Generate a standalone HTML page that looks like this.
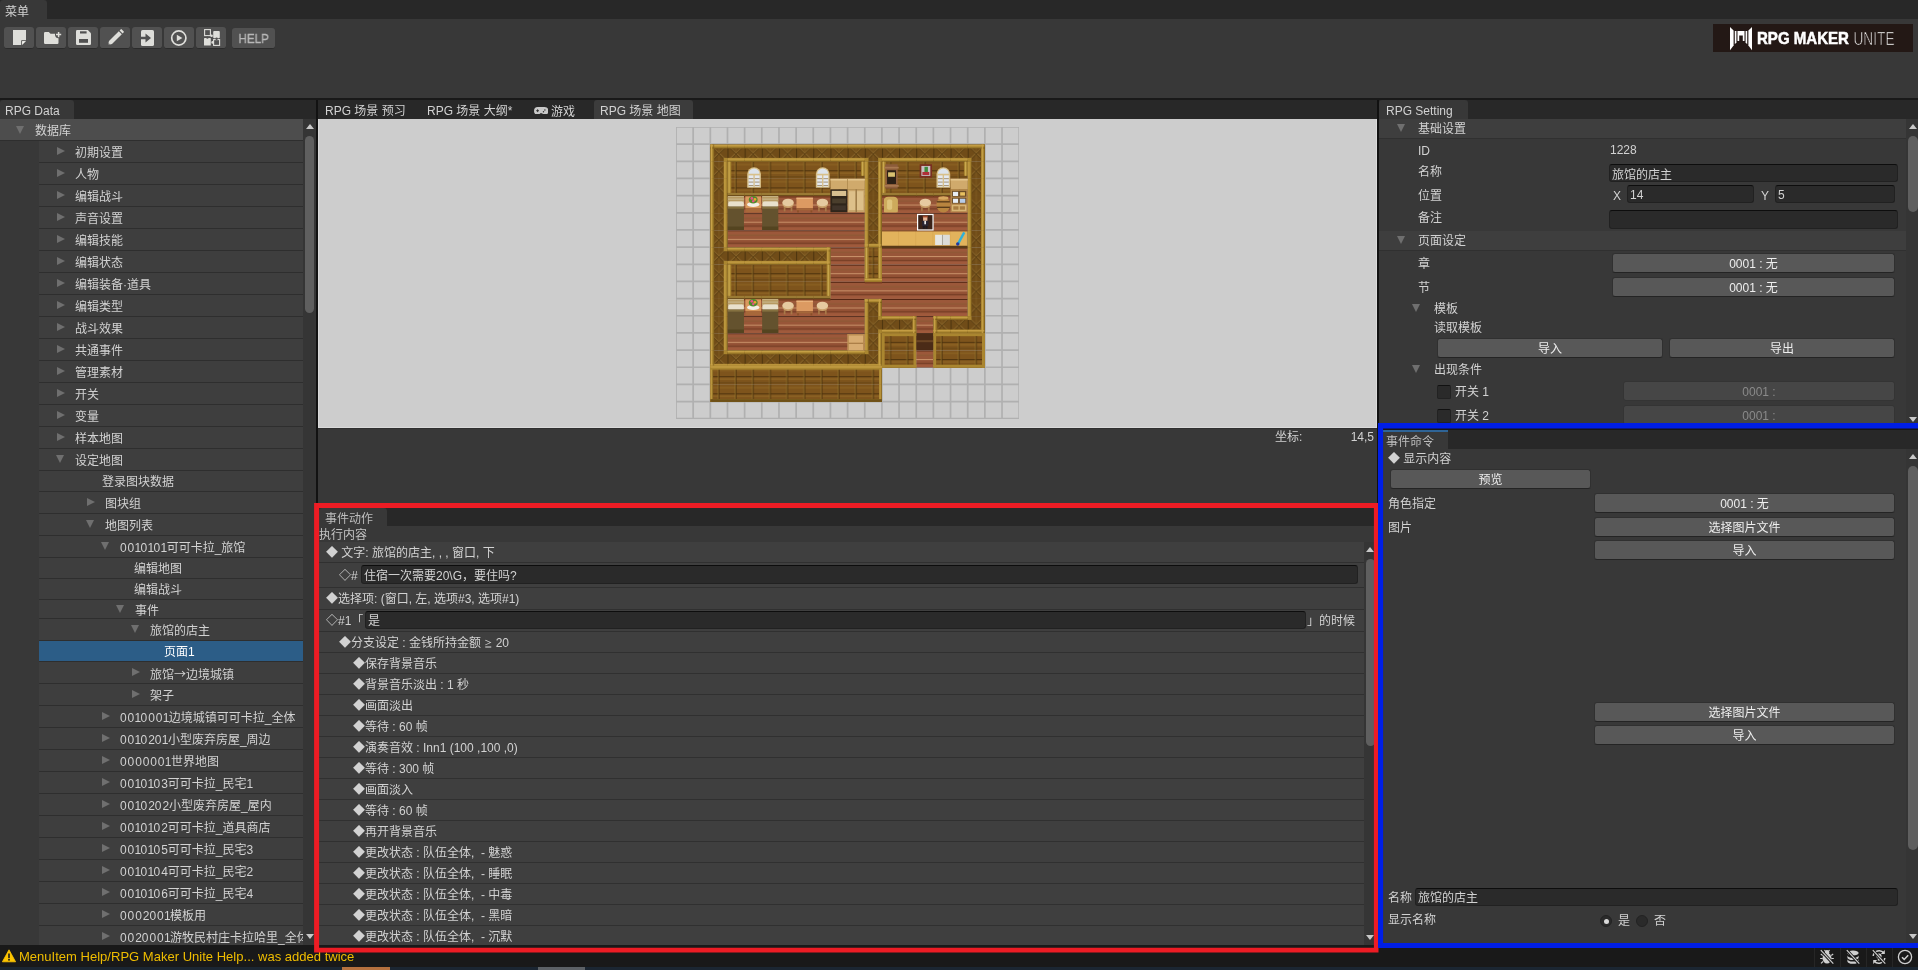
<!DOCTYPE html><html lang="zh"><head><meta charset="utf-8"><title>RPG Maker Unite</title><style>
*{box-sizing:border-box}
html,body{margin:0;padding:0}
body{width:1918px;height:970px;position:relative;overflow:hidden;background:#383838;
 font-family:"Liberation Sans","Noto Sans CJK SC",sans-serif;font-size:12px;color:#d2d2d2;line-height:16px}
.a{position:absolute}
.t{position:absolute;white-space:nowrap;line-height:16px;height:16px}
.bar{position:absolute;background:#282828}
.tab{position:absolute;background:#383838;border-radius:3px 3px 0 0}
.row{position:absolute;left:39px;width:264px;background:#3e3e3e;border-bottom:1px solid #2e2e2e}
.btn{position:absolute;padding-top:2px;background:#585858;border-radius:3px;border:1px solid #303030;border-bottom-color:#242424;
 text-align:center;color:#eeeeee;line-height:16px;white-space:nowrap}
.btn.dis{background:#464646;color:#8a8a8a;border-color:#343434}
.inp{position:absolute;background:#2a2a2a;border-radius:3px;border:1px solid #212121;border-top-color:#0d0d0d;
 color:#d2d2d2;line-height:16px;white-space:nowrap;padding-left:2px;overflow:hidden}
.tb{position:absolute;top:27px;width:30px;height:22px;background:#515151;border-radius:3px;border-bottom:1px solid #2b2b2b}
.arr{position:absolute;width:0;height:0}
.row i{font-style:normal;letter-spacing:.9px}.row b{font-weight:normal;letter-spacing:-.65px;margin-left:-.6px}
.er{position:absolute;left:319px;width:1045px;background:#3f3f3f;border-bottom:1px solid #303030}
.thumb{position:absolute;background:#5f5f5f;border-radius:5px}
</style></head><body><div id="root" style="position:absolute;left:0;top:0;width:1918px;height:970px;will-change:transform">
<div class="bar" style="left:0;top:0;width:1918px;height:19px"></div>
<div class="tab" style="left:0;top:0;width:47px;height:19px"></div>
<div class="t" style="left:5px;top:4px">菜单</div>
<div class="a" style="left:0;top:98px;width:1918px;height:2px;background:#191919"></div>
<div class="tb" style="left:4px"><svg class="a" style="left:0;top:0" width="30" height="21" viewBox="0 0 30 21"><path d="M9 3h13v10.500l-4.500 4.500H9z" fill="#dededa"/><path d="M18 18v-4h4z" fill="#f4f4f0"/><path d="M17.600 18.200v-4.600h4.600" fill="none" stroke="#515151" stroke-width="0.9"/></svg></div>
<div class="tb" style="left:36px"><svg class="a" style="left:0;top:0" width="30" height="21" viewBox="0 0 30 21"><path d="M8 6.200q0-1.200 1.200-1.200h3.600l1.700 1.800h6.800q1.200 0 1.200 1.200v7.800q0 1.200-1.200 1.200H9.200q-1.200 0-1.200-1.200z" fill="#dededa"/><circle cx="22.600" cy="7.600" r="3.600" fill="#515151"/><path d="M22.600 5v5.200M20 7.600h5.200" stroke="#dededa" stroke-width="1.500"/></svg></div>
<div class="tb" style="left:68px"><svg class="a" style="left:0;top:0" width="30" height="21" viewBox="0 0 30 21"><path d="M8 4.200q0-1.200 1.200-1.200h10.600l3.200 3.200v10.600q0 1.200-1.200 1.200H9.200q-1.200 0-1.200-1.200z" fill="#dededa"/><rect x="12" y="4.300" width="6.600" height="2.200" fill="#515151"/><rect x="11" y="12" width="9" height="3.800" fill="#515151"/></svg></div>
<div class="tb" style="left:100px"><svg class="a" style="left:0;top:0" width="30" height="21" viewBox="0 0 30 21"><path d="M8 18l1-4 9.800-9.800 3 3L12 17z" fill="#dededa"/><path d="M19.600 3.400l1-1q.6-.6 1.200 0l1.800 1.800q.6.6 0 1.200l-1 1z" fill="#dededa"/><path d="M8 18l.5-2 1.500 1.500z" fill="#515151"/></svg></div>
<div class="tb" style="left:132px"><svg class="a" style="left:0;top:0" width="30" height="21" viewBox="0 0 30 21"><rect x="9" y="3" width="13" height="16" rx="1.600" fill="#dededa"/><path d="M7 9.800h6.500V6.500l5.500 4.500-5.500 4.500v-3.300H7z" fill="#515151"/></svg></div>
<div class="tb" style="left:164px"><svg class="a" style="left:0;top:0" width="30" height="21" viewBox="0 0 30 21"><circle cx="14.800" cy="11" r="7.100" fill="none" stroke="#dededa" stroke-width="1.700"/><path d="M12.800 7.700l5.600 3.300-5.600 3.300z" fill="#dededa"/></svg></div>
<div class="tb" style="left:196px"><svg class="a" style="left:0;top:0" width="30" height="21" viewBox="0 0 30 21"><rect x="8.600" y="2.600" width="5.800" height="6" fill="none" stroke="#dededa" stroke-width="1.100"/><rect x="10.200" y="4.200" width="2.600" height="2.800" fill="#515151"/><rect x="8" y="11" width="6.800" height="7.600" rx=".6" fill="#dededa"/><rect x="17.200" y="4" width="6.600" height="7.200" rx="1" fill="#dededa"/><rect x="17.600" y="12.600" width="6" height="5.800" fill="none" stroke="#dededa" stroke-width="1.100"/><rect x="19" y="13" width="4" height="3.400" fill="#515151" opacity=".0"/><circle cx="15.600" cy="8.800" r="1.300" fill="#dededa"/><circle cx="16.600" cy="15.400" r="1.300" fill="#dededa"/><circle cx="11.400" cy="10.600" r="1.200" fill="#515151"/><circle cx="20.600" cy="11.800" r="1.200" fill="#515151"/></svg></div>
<div class="tb" style="left:232px;top:28px;width:43px;height:21px;color:#b8b8b8;text-align:center;font-size:13.5px;line-height:21px;-webkit-text-stroke:.3px #b8b8b8"><span style="display:inline-block;transform:scaleX(.86)">HELP</span></div>
<svg class="a" style="left:1713px;top:24px" width="200" height="28" viewBox="0 0 200 28"><rect width="200" height="28" fill="#231815"/><path d="M17 3l3.600 3.600v14.800L17 26.300z" fill="#fff"/><path d="M39 3l-3.600 3.600v14.800l3.600 4.900z" fill="#fff"/><path d="M21.800 7h1.600v11.500l-1.600 1.700z" fill="#fff"/><path d="M34.200 7h-1.600v11.500l1.600 1.700z" fill="#fff"/><path d="M24.500 7h7v10h-1.700v-5.500h-3.600v5.500h-1.700z" fill="#fff"/><text x="44" y="20.300" font-family="Liberation Sans,sans-serif" font-weight="bold" font-size="16.200" fill="#fff" stroke="#fff" stroke-width="0.5" textLength="92" lengthAdjust="spacingAndGlyphs">RPG MAKER</text><text x="140.500" y="20.500" font-family="Liberation Sans,sans-serif" font-size="17.600" fill="#fff" textLength="41" lengthAdjust="spacingAndGlyphs" stroke="#231815" stroke-width="0.7">UNITE</text></svg>
<div class="bar" style="left:0;top:100px;width:316px;height:19px"></div>
<div class="tab" style="left:0;top:100px;width:74px;height:19px"></div>
<div class="t" style="left:5px;top:103px">RPG Data</div>
<div class="a" style="left:316px;top:100px;width:2px;height:845px;background:#121212"></div>
<div class="a" style="left:303px;top:119px;width:13px;height:826px;background:#353535"></div>
<div class="thumb" style="left:305px;top:136px;width:9px;height:177px"></div>
<div class="arr" style="left:306px;top:124px;border-left:4px solid transparent;border-right:4px solid transparent;border-bottom:5px solid #c8c8c8"></div>
<div class="arr" style="left:306px;top:934px;border-left:4px solid transparent;border-right:4px solid transparent;border-top:5px solid #c8c8c8"></div>
<div class="a" style="left:0;top:119px;width:303px;height:22px;background:#4d4d4d;border-bottom:1px solid #2e2e2e"></div>
<div class="arr" style="left:16px;top:126px;border-left:4.5px solid transparent;border-right:4.5px solid transparent;border-top:8px solid #6f6f6f"></div>
<div class="t" style="left:35px;top:123px">数据库</div>
<div class="row" style="top:141px;height:22px;background:#3e3e3e;overflow:hidden"><div class="t" style="left:36px;top:4px">初期设置</div></div>
<div class="arr" style="left:57px;top:147px;border-top:4.5px solid transparent;border-bottom:4.5px solid transparent;border-left:8px solid #6f6f6f"></div>
<div class="row" style="top:163px;height:22px;background:#3e3e3e;overflow:hidden"><div class="t" style="left:36px;top:4px">人物</div></div>
<div class="arr" style="left:57px;top:169px;border-top:4.5px solid transparent;border-bottom:4.5px solid transparent;border-left:8px solid #6f6f6f"></div>
<div class="row" style="top:185px;height:22px;background:#3e3e3e;overflow:hidden"><div class="t" style="left:36px;top:4px">编辑战斗</div></div>
<div class="arr" style="left:57px;top:191px;border-top:4.5px solid transparent;border-bottom:4.5px solid transparent;border-left:8px solid #6f6f6f"></div>
<div class="row" style="top:207px;height:22px;background:#3e3e3e;overflow:hidden"><div class="t" style="left:36px;top:4px">声音设置</div></div>
<div class="arr" style="left:57px;top:213px;border-top:4.5px solid transparent;border-bottom:4.5px solid transparent;border-left:8px solid #6f6f6f"></div>
<div class="row" style="top:229px;height:22px;background:#3e3e3e;overflow:hidden"><div class="t" style="left:36px;top:4px">编辑技能</div></div>
<div class="arr" style="left:57px;top:235px;border-top:4.5px solid transparent;border-bottom:4.5px solid transparent;border-left:8px solid #6f6f6f"></div>
<div class="row" style="top:251px;height:22px;background:#3e3e3e;overflow:hidden"><div class="t" style="left:36px;top:4px">编辑状态</div></div>
<div class="arr" style="left:57px;top:257px;border-top:4.5px solid transparent;border-bottom:4.5px solid transparent;border-left:8px solid #6f6f6f"></div>
<div class="row" style="top:273px;height:22px;background:#3e3e3e;overflow:hidden"><div class="t" style="left:36px;top:4px">编辑装备·道具</div></div>
<div class="arr" style="left:57px;top:279px;border-top:4.5px solid transparent;border-bottom:4.5px solid transparent;border-left:8px solid #6f6f6f"></div>
<div class="row" style="top:295px;height:22px;background:#3e3e3e;overflow:hidden"><div class="t" style="left:36px;top:4px">编辑类型</div></div>
<div class="arr" style="left:57px;top:301px;border-top:4.5px solid transparent;border-bottom:4.5px solid transparent;border-left:8px solid #6f6f6f"></div>
<div class="row" style="top:317px;height:22px;background:#3e3e3e;overflow:hidden"><div class="t" style="left:36px;top:4px">战斗效果</div></div>
<div class="arr" style="left:57px;top:323px;border-top:4.5px solid transparent;border-bottom:4.5px solid transparent;border-left:8px solid #6f6f6f"></div>
<div class="row" style="top:339px;height:22px;background:#3e3e3e;overflow:hidden"><div class="t" style="left:36px;top:4px">共通事件</div></div>
<div class="arr" style="left:57px;top:345px;border-top:4.5px solid transparent;border-bottom:4.5px solid transparent;border-left:8px solid #6f6f6f"></div>
<div class="row" style="top:361px;height:22px;background:#3e3e3e;overflow:hidden"><div class="t" style="left:36px;top:4px">管理素材</div></div>
<div class="arr" style="left:57px;top:367px;border-top:4.5px solid transparent;border-bottom:4.5px solid transparent;border-left:8px solid #6f6f6f"></div>
<div class="row" style="top:383px;height:22px;background:#3e3e3e;overflow:hidden"><div class="t" style="left:36px;top:4px">开关</div></div>
<div class="arr" style="left:57px;top:389px;border-top:4.5px solid transparent;border-bottom:4.5px solid transparent;border-left:8px solid #6f6f6f"></div>
<div class="row" style="top:405px;height:22px;background:#3e3e3e;overflow:hidden"><div class="t" style="left:36px;top:4px">变量</div></div>
<div class="arr" style="left:57px;top:411px;border-top:4.5px solid transparent;border-bottom:4.5px solid transparent;border-left:8px solid #6f6f6f"></div>
<div class="row" style="top:427px;height:22px;background:#3e3e3e;overflow:hidden"><div class="t" style="left:36px;top:4px">样本地图</div></div>
<div class="arr" style="left:57px;top:433px;border-top:4.5px solid transparent;border-bottom:4.5px solid transparent;border-left:8px solid #6f6f6f"></div>
<div class="row" style="top:449px;height:22px;background:#3e3e3e;overflow:hidden"><div class="t" style="left:36px;top:4px">设定地图</div></div>
<div class="arr" style="left:56px;top:455px;border-left:4.5px solid transparent;border-right:4.5px solid transparent;border-top:8px solid #6f6f6f"></div>
<div class="row" style="top:471px;height:21px;background:#3e3e3e;overflow:hidden"><div class="t" style="left:63px;top:3px">登录图块数据</div></div>
<div class="row" style="top:492px;height:22px;background:#3e3e3e;overflow:hidden"><div class="t" style="left:66px;top:4px">图块组</div></div>
<div class="arr" style="left:87px;top:498px;border-top:4.5px solid transparent;border-bottom:4.5px solid transparent;border-left:8px solid #6f6f6f"></div>
<div class="row" style="top:514px;height:22px;background:#3e3e3e;overflow:hidden"><div class="t" style="left:66px;top:4px">地图列表</div></div>
<div class="arr" style="left:86px;top:520px;border-left:4.5px solid transparent;border-right:4.5px solid transparent;border-top:8px solid #6f6f6f"></div>
<div class="row" style="top:536px;height:22px;background:#3e3e3e;overflow:hidden"><div class="t" style="left:81px;top:4px"><i>00</i><b>1</b><i>0</i><b>1</b><i>0</i><b>1</b>可可卡拉_旅馆</div></div>
<div class="arr" style="left:101px;top:542px;border-left:4.5px solid transparent;border-right:4.5px solid transparent;border-top:8px solid #6f6f6f"></div>
<div class="row" style="top:558px;height:21px;background:#3e3e3e;overflow:hidden"><div class="t" style="left:95px;top:3px">编辑地图</div></div>
<div class="row" style="top:579px;height:21px;background:#3e3e3e;overflow:hidden"><div class="t" style="left:95px;top:3px">编辑战斗</div></div>
<div class="row" style="top:600px;height:19px;background:#3e3e3e;overflow:hidden"><div class="t" style="left:96px;top:3px">事件</div></div>
<div class="arr" style="left:116px;top:605px;border-left:4.5px solid transparent;border-right:4.5px solid transparent;border-top:8px solid #6f6f6f"></div>
<div class="row" style="top:619px;height:22px;background:#3e3e3e;overflow:hidden"><div class="t" style="left:111px;top:4px">旅馆的店主</div></div>
<div class="arr" style="left:131px;top:625px;border-left:4.5px solid transparent;border-right:4.5px solid transparent;border-top:8px solid #6f6f6f"></div>
<div class="row" style="top:641px;height:21px;background:#2c5d87;overflow:hidden"><div class="t" style="left:125px;top:3px;color:#fff">页面1</div></div>
<div class="row" style="top:662px;height:22px;background:#3e3e3e;overflow:hidden"><div class="t" style="left:111px;top:4px">旅馆<span style="font-family:Noto Sans CJK SC,sans-serif">→</span>边境城镇</div></div>
<div class="arr" style="left:132px;top:668px;border-top:4.5px solid transparent;border-bottom:4.5px solid transparent;border-left:8px solid #6f6f6f"></div>
<div class="row" style="top:684px;height:22px;background:#3e3e3e;overflow:hidden"><div class="t" style="left:111px;top:4px">架子</div></div>
<div class="arr" style="left:132px;top:690px;border-top:4.5px solid transparent;border-bottom:4.5px solid transparent;border-left:8px solid #6f6f6f"></div>
<div class="row" style="top:706px;height:22px;background:#3e3e3e;overflow:hidden"><div class="t" style="left:81px;top:4px"><i>00</i><b>1</b><i>000</i><b>1</b>边境城镇可可卡拉_全体</div></div>
<div class="arr" style="left:102px;top:712px;border-top:4.5px solid transparent;border-bottom:4.5px solid transparent;border-left:8px solid #6f6f6f"></div>
<div class="row" style="top:728px;height:22px;background:#3e3e3e;overflow:hidden"><div class="t" style="left:81px;top:4px"><i>00</i><b>1</b><i>0</i>2<i>0</i><b>1</b>小型废弃房屋_周边</div></div>
<div class="arr" style="left:102px;top:734px;border-top:4.5px solid transparent;border-bottom:4.5px solid transparent;border-left:8px solid #6f6f6f"></div>
<div class="row" style="top:750px;height:22px;background:#3e3e3e;overflow:hidden"><div class="t" style="left:81px;top:4px"><i>000000</i><b>1</b>世界地图</div></div>
<div class="arr" style="left:102px;top:756px;border-top:4.5px solid transparent;border-bottom:4.5px solid transparent;border-left:8px solid #6f6f6f"></div>
<div class="row" style="top:772px;height:22px;background:#3e3e3e;overflow:hidden"><div class="t" style="left:81px;top:4px"><i>00</i><b>1</b><i>0</i><b>1</b><i>0</i>3可可卡拉_民宅1</div></div>
<div class="arr" style="left:102px;top:778px;border-top:4.5px solid transparent;border-bottom:4.5px solid transparent;border-left:8px solid #6f6f6f"></div>
<div class="row" style="top:794px;height:22px;background:#3e3e3e;overflow:hidden"><div class="t" style="left:81px;top:4px"><i>00</i><b>1</b><i>0</i>2<i>0</i>2小型废弃房屋_屋内</div></div>
<div class="arr" style="left:102px;top:800px;border-top:4.5px solid transparent;border-bottom:4.5px solid transparent;border-left:8px solid #6f6f6f"></div>
<div class="row" style="top:816px;height:22px;background:#3e3e3e;overflow:hidden"><div class="t" style="left:81px;top:4px"><i>00</i><b>1</b><i>0</i><b>1</b><i>0</i>2可可卡拉_道具商店</div></div>
<div class="arr" style="left:102px;top:822px;border-top:4.5px solid transparent;border-bottom:4.5px solid transparent;border-left:8px solid #6f6f6f"></div>
<div class="row" style="top:838px;height:22px;background:#3e3e3e;overflow:hidden"><div class="t" style="left:81px;top:4px"><i>00</i><b>1</b><i>0</i><b>1</b><i>0</i>5可可卡拉_民宅3</div></div>
<div class="arr" style="left:102px;top:844px;border-top:4.5px solid transparent;border-bottom:4.5px solid transparent;border-left:8px solid #6f6f6f"></div>
<div class="row" style="top:860px;height:22px;background:#3e3e3e;overflow:hidden"><div class="t" style="left:81px;top:4px"><i>00</i><b>1</b><i>0</i><b>1</b><i>0</i>4可可卡拉_民宅2</div></div>
<div class="arr" style="left:102px;top:866px;border-top:4.5px solid transparent;border-bottom:4.5px solid transparent;border-left:8px solid #6f6f6f"></div>
<div class="row" style="top:882px;height:22px;background:#3e3e3e;overflow:hidden"><div class="t" style="left:81px;top:4px"><i>00</i><b>1</b><i>0</i><b>1</b><i>0</i>6可可卡拉_民宅4</div></div>
<div class="arr" style="left:102px;top:888px;border-top:4.5px solid transparent;border-bottom:4.5px solid transparent;border-left:8px solid #6f6f6f"></div>
<div class="row" style="top:904px;height:22px;background:#3e3e3e;overflow:hidden"><div class="t" style="left:81px;top:4px"><i>000</i>2<i>00</i><b>1</b>模板用</div></div>
<div class="arr" style="left:102px;top:910px;border-top:4.5px solid transparent;border-bottom:4.5px solid transparent;border-left:8px solid #6f6f6f"></div>
<div class="row" style="top:926px;height:22px;background:#3e3e3e;overflow:hidden"><div class="t" style="left:81px;top:4px"><i>00</i>2<i>000</i><b>1</b>游牧民村庄卡拉哈里_全体</div></div>
<div class="arr" style="left:102px;top:932px;border-top:4.5px solid transparent;border-bottom:4.5px solid transparent;border-left:8px solid #6f6f6f"></div>
<div class="bar" style="left:318px;top:100px;width:1059px;height:19px"></div>
<div class="tab" style="left:594px;top:100px;width:99px;height:19px;background:#3c3c3c"></div>
<div class="t" style="left:325px;top:103px">RPG 场景 预习</div>
<div class="t" style="left:427px;top:103px">RPG 场景 大纲*</div>
<svg class="a" style="left:533.800px;top:106.500px" width="14.400" height="7.800" viewBox="0 0 14.400 7.800"><path d="M3.800 0h6.800a3.800 3.900 0 0 1 0 7.800c-1.300 0-1.900-.9-2.400-1.600h-2c-.5.700-1.100 1.600-2.400 1.600a3.800 3.900 0 0 1 0-7.800z" fill="#c8c8c8"/><path d="M3.600 2.300v2.800M2.200 3.700h2.800" stroke="#282828" stroke-width=".9"/><circle cx="9.500" cy="4.700" r=".7" fill="#282828"/><circle cx="10.900" cy="3" r=".7" fill="#282828"/></svg>
<div class="t" style="left:551px;top:104px">游戏</div>
<div class="t" style="left:600px;top:103px">RPG 场景 地图</div>
<div class="a" style="left:318px;top:119px;width:1059px;height:309px;background:#cdcdcd;border:1px solid #dadada;border-top:0"></div><div class="a" style="left:318px;top:428px;width:1059px;height:1px;background:#2f2f2f"></div>
<svg class="a" style="left:675.85px;top:127.4px" width="343.2" height="291.72" viewBox="0 0 20 17" shape-rendering="auto"><defs><pattern id="pf" width="1" height="1" patternUnits="userSpaceOnUse"><rect width="1" height="1" fill="#985638"/><rect y="0" width="1" height=".06" fill="#4e2210"/><rect y=".06" width="1" height=".2" fill="#9c583a"/><rect y=".26" width="1" height=".05" fill="#8a5a34"/><rect y=".5" width="1" height=".07" fill="#c89068"/><rect y=".57" width="1" height=".18" fill="#925034"/><rect y=".75" width="1" height=".05" fill="#552612"/><rect y=".8" width="1" height=".2" fill="#a05a3c"/></pattern><pattern id="pw" width="1" height="1" patternUnits="userSpaceOnUse"><rect width="1" height="1" fill="#7e541c"/><rect y=".12" width="1" height=".1" fill="#885e20"/><rect y=".5" width="1" height=".06" fill="#52360f"/><rect y=".62" width="1" height=".1" fill="#8a6022"/><rect y=".86" width="1" height=".05" fill="#624213"/><rect x=".43" width=".05" height="1" fill="#9a782c"/><rect x=".48" width=".05" height="1" fill="#4a300c"/></pattern><pattern id="pr" width="1" height="1" patternUnits="userSpaceOnUse"><rect width="1" height="1" fill="#704c18"/><rect x=".0" width=".06" height="1" fill="#4c340e"/><rect x=".47" width=".06" height="1" fill="#7c581e"/><path d="M.08 .1L.92 .9M.92 .1L.08 .9" stroke="#846026" stroke-width=".08" fill="none"/><path d="M.1 .17L.9 .97M.9 .17L.1 .97" stroke="#553a10" stroke-width=".05" fill="none"/></pattern><pattern id="pc" width="1" height="1" patternUnits="userSpaceOnUse"><rect width="1" height="1" fill="#e2b35c"/><rect x=".97" width=".03" height="1" fill="#d3a24c"/></pattern></defs><g stroke="#b0b0b0" stroke-width=".1" fill="none"><path d="M0 0V17M1 0V17M2 0V17M3 0V17M4 0V17M5 0V17M6 0V17M7 0V17M8 0V17M9 0V17M10 0V17M11 0V17M12 0V17M13 0V17M14 0V17M15 0V17M16 0V17M17 0V17M18 0V17M19 0V17M20 0V17M0 0H20M0 1H20M0 2H20M0 3H20M0 4H20M0 5H20M0 6H20M0 7H20M0 8H20M0 9H20M0 10H20M0 11H20M0 12H20M0 13H20M0 14H20M0 15H20M0 16H20M0 17H20"/></g><g transform="translate(2,1.02)"><rect x="0" y="0" width="16" height="1" fill="url(#pr)"/><rect x="0" y="1" width="1" height="1" fill="url(#pr)"/><rect x="1" y="1" width="8" height="1" fill="url(#pw)"/><rect x="9" y="1" width="1" height="1" fill="url(#pr)"/><rect x="10" y="1" width="5" height="1" fill="url(#pw)"/><rect x="15" y="1" width="1" height="1" fill="url(#pr)"/><rect x="0" y="2" width="1" height="1" fill="url(#pr)"/><rect x="1" y="2" width="8" height="1" fill="url(#pw)"/><rect x="9" y="2" width="1" height="1" fill="url(#pr)"/><rect x="10" y="2" width="5" height="1" fill="url(#pw)"/><rect x="15" y="2" width="1" height="1" fill="url(#pr)"/><rect x="0" y="3" width="1" height="1" fill="url(#pr)"/><rect x="1" y="3" width="8" height="1" fill="url(#pf)"/><rect x="9" y="3" width="1" height="1" fill="url(#pr)"/><rect x="10" y="3" width="5" height="1" fill="url(#pf)"/><rect x="15" y="3" width="1" height="1" fill="url(#pr)"/><rect x="0" y="4" width="1" height="1" fill="url(#pr)"/><rect x="1" y="4" width="8" height="1" fill="url(#pf)"/><rect x="9" y="4" width="1" height="1" fill="url(#pr)"/><rect x="10" y="4" width="5" height="1" fill="url(#pf)"/><rect x="15" y="4" width="1" height="1" fill="url(#pr)"/><rect x="0" y="5" width="1" height="1" fill="url(#pr)"/><rect x="1" y="5" width="8" height="1" fill="url(#pf)"/><rect x="9" y="5" width="1" height="1" fill="url(#pr)"/><rect x="10" y="5" width="5" height="1" fill="url(#pc)"/><rect x="15" y="5" width="1" height="1" fill="url(#pr)"/><rect x="0" y="6" width="7" height="1" fill="url(#pr)"/><rect x="7" y="6" width="2" height="1" fill="url(#pf)"/><rect x="9" y="6" width="1" height="1" fill="url(#pw)"/><rect x="10" y="6" width="5" height="1" fill="url(#pf)"/><rect x="15" y="6" width="1" height="1" fill="url(#pr)"/><rect x="0" y="7" width="1" height="1" fill="url(#pr)"/><rect x="1" y="7" width="6" height="1" fill="url(#pw)"/><rect x="7" y="7" width="2" height="1" fill="url(#pf)"/><rect x="9" y="7" width="1" height="1" fill="url(#pw)"/><rect x="10" y="7" width="5" height="1" fill="url(#pf)"/><rect x="15" y="7" width="1" height="1" fill="url(#pr)"/><rect x="0" y="8" width="1" height="1" fill="url(#pr)"/><rect x="1" y="8" width="6" height="1" fill="url(#pw)"/><rect x="7" y="8" width="8" height="1" fill="url(#pf)"/><rect x="15" y="8" width="1" height="1" fill="url(#pr)"/><rect x="0" y="9" width="1" height="1" fill="url(#pr)"/><rect x="1" y="9" width="8" height="1" fill="url(#pf)"/><rect x="9" y="9" width="1" height="1" fill="url(#pr)"/><rect x="10" y="9" width="5" height="1" fill="url(#pf)"/><rect x="15" y="9" width="1" height="1" fill="url(#pr)"/><rect x="0" y="10" width="1" height="1" fill="url(#pr)"/><rect x="1" y="10" width="8" height="1" fill="url(#pf)"/><rect x="9" y="10" width="3" height="1" fill="url(#pr)"/><rect x="12" y="10" width="1" height="1" fill="url(#pf)"/><rect x="13" y="10" width="3" height="1" fill="url(#pr)"/><rect x="0" y="11" width="1" height="1" fill="url(#pr)"/><rect x="1" y="11" width="8" height="1" fill="url(#pf)"/><rect x="9" y="11" width="1" height="1" fill="url(#pr)"/><rect x="10" y="11" width="2" height="1" fill="url(#pw)"/><rect x="12" y="11" width="1" height="1" fill="#4a2a16"/><rect x="13" y="11" width="3" height="1" fill="url(#pw)"/><rect x="0" y="12" width="10" height="1" fill="url(#pr)"/><rect x="10" y="12" width="2" height="1" fill="url(#pw)"/><rect x="12" y="12" width="1" height="1" fill="url(#pf)"/><rect x="13" y="12" width="3" height="1" fill="url(#pw)"/><rect x="0" y="13" width="10" height="1" fill="url(#pw)"/><rect x="0" y="14" width="10" height="1" fill="url(#pw)"/><rect x="1" y="2.82" width="1" height="0.18" fill="#9a7a34"/><rect x="1" y="2.96" width="1" height="0.06" fill="#5a3c12"/><rect x="2" y="2.82" width="1" height="0.18" fill="#9a7a34"/><rect x="2" y="2.96" width="1" height="0.06" fill="#5a3c12"/><rect x="3" y="2.82" width="1" height="0.18" fill="#9a7a34"/><rect x="3" y="2.96" width="1" height="0.06" fill="#5a3c12"/><rect x="4" y="2.82" width="1" height="0.18" fill="#9a7a34"/><rect x="4" y="2.96" width="1" height="0.06" fill="#5a3c12"/><rect x="5" y="2.82" width="1" height="0.18" fill="#9a7a34"/><rect x="5" y="2.96" width="1" height="0.06" fill="#5a3c12"/><rect x="6" y="2.82" width="1" height="0.18" fill="#9a7a34"/><rect x="6" y="2.96" width="1" height="0.06" fill="#5a3c12"/><rect x="7" y="2.82" width="1" height="0.18" fill="#9a7a34"/><rect x="7" y="2.96" width="1" height="0.06" fill="#5a3c12"/><rect x="8" y="2.82" width="1" height="0.18" fill="#9a7a34"/><rect x="8" y="2.96" width="1" height="0.06" fill="#5a3c12"/><rect x="10" y="2.82" width="1" height="0.18" fill="#9a7a34"/><rect x="10" y="2.96" width="1" height="0.06" fill="#5a3c12"/><rect x="11" y="2.82" width="1" height="0.18" fill="#9a7a34"/><rect x="11" y="2.96" width="1" height="0.06" fill="#5a3c12"/><rect x="12" y="2.82" width="1" height="0.18" fill="#9a7a34"/><rect x="12" y="2.96" width="1" height="0.06" fill="#5a3c12"/><rect x="13" y="2.82" width="1" height="0.18" fill="#9a7a34"/><rect x="13" y="2.96" width="1" height="0.06" fill="#5a3c12"/><rect x="14" y="2.82" width="1" height="0.18" fill="#9a7a34"/><rect x="14" y="2.96" width="1" height="0.06" fill="#5a3c12"/><rect x="1" y="3" width="1" height="0.1" fill="#7a4022"/><rect x="2" y="3" width="1" height="0.1" fill="#7a4022"/><rect x="3" y="3" width="1" height="0.1" fill="#7a4022"/><rect x="4" y="3" width="1" height="0.1" fill="#7a4022"/><rect x="5" y="3" width="1" height="0.1" fill="#7a4022"/><rect x="6" y="3" width="1" height="0.1" fill="#7a4022"/><rect x="7" y="3" width="1" height="0.1" fill="#7a4022"/><rect x="8" y="3" width="1" height="0.1" fill="#7a4022"/><rect x="10" y="3" width="1" height="0.1" fill="#7a4022"/><rect x="11" y="3" width="1" height="0.1" fill="#7a4022"/><rect x="12" y="3" width="1" height="0.1" fill="#7a4022"/><rect x="13" y="3" width="1" height="0.1" fill="#7a4022"/><rect x="14" y="3" width="1" height="0.1" fill="#7a4022"/><rect x="9" y="7.82" width="1" height="0.18" fill="#9a7a34"/><rect x="9" y="7.96" width="1" height="0.06" fill="#5a3c12"/><rect x="1" y="8.82" width="1" height="0.18" fill="#9a7a34"/><rect x="1" y="8.96" width="1" height="0.06" fill="#5a3c12"/><rect x="2" y="8.82" width="1" height="0.18" fill="#9a7a34"/><rect x="2" y="8.96" width="1" height="0.06" fill="#5a3c12"/><rect x="3" y="8.82" width="1" height="0.18" fill="#9a7a34"/><rect x="3" y="8.96" width="1" height="0.06" fill="#5a3c12"/><rect x="4" y="8.82" width="1" height="0.18" fill="#9a7a34"/><rect x="4" y="8.96" width="1" height="0.06" fill="#5a3c12"/><rect x="5" y="8.82" width="1" height="0.18" fill="#9a7a34"/><rect x="5" y="8.96" width="1" height="0.06" fill="#5a3c12"/><rect x="6" y="8.82" width="1" height="0.18" fill="#9a7a34"/><rect x="6" y="8.96" width="1" height="0.06" fill="#5a3c12"/><rect x="9" y="8" width="1" height="0.1" fill="#7a4022"/><rect x="1" y="9" width="1" height="0.1" fill="#7a4022"/><rect x="2" y="9" width="1" height="0.1" fill="#7a4022"/><rect x="3" y="9" width="1" height="0.1" fill="#7a4022"/><rect x="4" y="9" width="1" height="0.1" fill="#7a4022"/><rect x="5" y="9" width="1" height="0.1" fill="#7a4022"/><rect x="6" y="9" width="1" height="0.1" fill="#7a4022"/><rect x="10" y="5.9" width="5" height="0.14" fill="#5a3a18"/><rect x="10" y="5" width="5" height="0.06" fill="#6e2f1a"/><rect x="12" y="11" width="1" height="0.95" fill="#4b2b17"/><rect x="12" y="11.4" width="1" height="0.12" fill="#6a4424"/><rect x="0" y="0" width="1" height="0.22" fill="#aa8630"/><rect x="0" y="0" width="0.22" height="1" fill="#aa8630"/><rect x="0.78" y="0.78" width="0.22" height="0.22" fill="#aa8630"/><rect x="1" y="0" width="1" height="0.22" fill="#aa8630"/><rect x="1" y="0.78" width="1" height="0.22" fill="#aa8630"/><rect x="2" y="0" width="1" height="0.22" fill="#aa8630"/><rect x="2" y="0.78" width="1" height="0.22" fill="#aa8630"/><rect x="3" y="0" width="1" height="0.22" fill="#aa8630"/><rect x="3" y="0.78" width="1" height="0.22" fill="#aa8630"/><rect x="4" y="0" width="1" height="0.22" fill="#aa8630"/><rect x="4" y="0.78" width="1" height="0.22" fill="#aa8630"/><rect x="5" y="0" width="1" height="0.22" fill="#aa8630"/><rect x="5" y="0.78" width="1" height="0.22" fill="#aa8630"/><rect x="6" y="0" width="1" height="0.22" fill="#aa8630"/><rect x="6" y="0.78" width="1" height="0.22" fill="#aa8630"/><rect x="7" y="0" width="1" height="0.22" fill="#aa8630"/><rect x="7" y="0.78" width="1" height="0.22" fill="#aa8630"/><rect x="8" y="0" width="1" height="0.22" fill="#aa8630"/><rect x="8" y="0.78" width="1" height="0.22" fill="#aa8630"/><rect x="9" y="0" width="1" height="0.22" fill="#aa8630"/><rect x="9" y="0.78" width="0.22" height="0.22" fill="#aa8630"/><rect x="9.78" y="0.78" width="0.22" height="0.22" fill="#aa8630"/><rect x="10" y="0" width="1" height="0.22" fill="#aa8630"/><rect x="10" y="0.78" width="1" height="0.22" fill="#aa8630"/><rect x="11" y="0" width="1" height="0.22" fill="#aa8630"/><rect x="11" y="0.78" width="1" height="0.22" fill="#aa8630"/><rect x="12" y="0" width="1" height="0.22" fill="#aa8630"/><rect x="12" y="0.78" width="1" height="0.22" fill="#aa8630"/><rect x="13" y="0" width="1" height="0.22" fill="#aa8630"/><rect x="13" y="0.78" width="1" height="0.22" fill="#aa8630"/><rect x="14" y="0" width="1" height="0.22" fill="#aa8630"/><rect x="14" y="0.78" width="1" height="0.22" fill="#aa8630"/><rect x="15" y="0" width="1" height="0.22" fill="#aa8630"/><rect x="15.78" y="0" width="0.22" height="1" fill="#aa8630"/><rect x="15" y="0.78" width="0.22" height="0.22" fill="#aa8630"/><rect x="0" y="1" width="0.22" height="1" fill="#aa8630"/><rect x="0.78" y="1" width="0.22" height="1" fill="#aa8630"/><rect x="9" y="1" width="0.22" height="1" fill="#aa8630"/><rect x="9.78" y="1" width="0.22" height="1" fill="#aa8630"/><rect x="15" y="1" width="0.22" height="1" fill="#aa8630"/><rect x="15.78" y="1" width="0.22" height="1" fill="#aa8630"/><rect x="0" y="2" width="0.22" height="1" fill="#aa8630"/><rect x="0.78" y="2" width="0.22" height="1" fill="#aa8630"/><rect x="9" y="2" width="0.22" height="1" fill="#aa8630"/><rect x="9.78" y="2" width="0.22" height="1" fill="#aa8630"/><rect x="15" y="2" width="0.22" height="1" fill="#aa8630"/><rect x="15.78" y="2" width="0.22" height="1" fill="#aa8630"/><rect x="0" y="3" width="0.22" height="1" fill="#aa8630"/><rect x="0.78" y="3" width="0.22" height="1" fill="#aa8630"/><rect x="9" y="3" width="0.22" height="1" fill="#aa8630"/><rect x="9.78" y="3" width="0.22" height="1" fill="#aa8630"/><rect x="15" y="3" width="0.22" height="1" fill="#aa8630"/><rect x="15.78" y="3" width="0.22" height="1" fill="#aa8630"/><rect x="0" y="4" width="0.22" height="1" fill="#aa8630"/><rect x="0.78" y="4" width="0.22" height="1" fill="#aa8630"/><rect x="9" y="4" width="0.22" height="1" fill="#aa8630"/><rect x="9.78" y="4" width="0.22" height="1" fill="#aa8630"/><rect x="15" y="4" width="0.22" height="1" fill="#aa8630"/><rect x="15.78" y="4" width="0.22" height="1" fill="#aa8630"/><rect x="0" y="5" width="0.22" height="1" fill="#aa8630"/><rect x="0.78" y="5" width="0.22" height="1" fill="#aa8630"/><rect x="9" y="5.78" width="1" height="0.22" fill="#aa8630"/><rect x="9" y="5" width="0.22" height="1" fill="#aa8630"/><rect x="9.78" y="5" width="0.22" height="1" fill="#aa8630"/><rect x="15" y="5" width="0.22" height="1" fill="#aa8630"/><rect x="15.78" y="5" width="0.22" height="1" fill="#aa8630"/><rect x="0" y="6" width="0.22" height="1" fill="#aa8630"/><rect x="0.78" y="6" width="0.22" height="0.22" fill="#aa8630"/><rect x="0.78" y="6.78" width="0.22" height="0.22" fill="#aa8630"/><rect x="1" y="6" width="1" height="0.22" fill="#aa8630"/><rect x="1" y="6.78" width="1" height="0.22" fill="#aa8630"/><rect x="2" y="6" width="1" height="0.22" fill="#aa8630"/><rect x="2" y="6.78" width="1" height="0.22" fill="#aa8630"/><rect x="3" y="6" width="1" height="0.22" fill="#aa8630"/><rect x="3" y="6.78" width="1" height="0.22" fill="#aa8630"/><rect x="4" y="6" width="1" height="0.22" fill="#aa8630"/><rect x="4" y="6.78" width="1" height="0.22" fill="#aa8630"/><rect x="5" y="6" width="1" height="0.22" fill="#aa8630"/><rect x="5" y="6.78" width="1" height="0.22" fill="#aa8630"/><rect x="6" y="6" width="1" height="0.22" fill="#aa8630"/><rect x="6" y="6.78" width="1" height="0.22" fill="#aa8630"/><rect x="6.78" y="6" width="0.22" height="1" fill="#aa8630"/><rect x="15" y="6" width="0.22" height="1" fill="#aa8630"/><rect x="15.78" y="6" width="0.22" height="1" fill="#aa8630"/><rect x="0" y="7" width="0.22" height="1" fill="#aa8630"/><rect x="0.78" y="7" width="0.22" height="1" fill="#aa8630"/><rect x="15" y="7" width="0.22" height="1" fill="#aa8630"/><rect x="15.78" y="7" width="0.22" height="1" fill="#aa8630"/><rect x="0" y="8" width="0.22" height="1" fill="#aa8630"/><rect x="0.78" y="8" width="0.22" height="1" fill="#aa8630"/><rect x="15" y="8" width="0.22" height="1" fill="#aa8630"/><rect x="15.78" y="8" width="0.22" height="1" fill="#aa8630"/><rect x="0" y="9" width="0.22" height="1" fill="#aa8630"/><rect x="0.78" y="9" width="0.22" height="1" fill="#aa8630"/><rect x="9" y="9" width="1" height="0.22" fill="#aa8630"/><rect x="9" y="9" width="0.22" height="1" fill="#aa8630"/><rect x="9.78" y="9" width="0.22" height="1" fill="#aa8630"/><rect x="15" y="9" width="0.22" height="1" fill="#aa8630"/><rect x="15.78" y="9" width="0.22" height="1" fill="#aa8630"/><rect x="0" y="10" width="0.22" height="1" fill="#aa8630"/><rect x="0.78" y="10" width="0.22" height="1" fill="#aa8630"/><rect x="9" y="10" width="0.22" height="1" fill="#aa8630"/><rect x="9.78" y="10" width="0.22" height="0.22" fill="#aa8630"/><rect x="9.78" y="10.78" width="0.22" height="0.22" fill="#aa8630"/><rect x="10" y="10" width="1" height="0.22" fill="#aa8630"/><rect x="10" y="10.78" width="1" height="0.22" fill="#aa8630"/><rect x="11" y="10" width="1" height="0.22" fill="#aa8630"/><rect x="11" y="10.78" width="1" height="0.22" fill="#aa8630"/><rect x="11.78" y="10" width="0.22" height="1" fill="#aa8630"/><rect x="13" y="10" width="1" height="0.22" fill="#aa8630"/><rect x="13" y="10.78" width="1" height="0.22" fill="#aa8630"/><rect x="13" y="10" width="0.22" height="1" fill="#aa8630"/><rect x="14" y="10" width="1" height="0.22" fill="#aa8630"/><rect x="14" y="10.78" width="1" height="0.22" fill="#aa8630"/><rect x="15" y="10.78" width="1" height="0.22" fill="#aa8630"/><rect x="15.78" y="10" width="0.22" height="1" fill="#aa8630"/><rect x="15" y="10" width="0.22" height="0.22" fill="#aa8630"/><rect x="0" y="11" width="0.22" height="1" fill="#aa8630"/><rect x="0.78" y="11" width="0.22" height="1" fill="#aa8630"/><rect x="9" y="11" width="0.22" height="1" fill="#aa8630"/><rect x="9.78" y="11" width="0.22" height="1" fill="#aa8630"/><rect x="15.84" y="11" width="0.16" height="1" fill="#aa8630"/><rect x="0" y="12.78" width="1" height="0.22" fill="#aa8630"/><rect x="0" y="12" width="0.22" height="1" fill="#aa8630"/><rect x="0.78" y="12" width="0.22" height="0.22" fill="#aa8630"/><rect x="1" y="12" width="1" height="0.22" fill="#aa8630"/><rect x="1" y="12.78" width="1" height="0.22" fill="#aa8630"/><rect x="2" y="12" width="1" height="0.22" fill="#aa8630"/><rect x="2" y="12.78" width="1" height="0.22" fill="#aa8630"/><rect x="3" y="12" width="1" height="0.22" fill="#aa8630"/><rect x="3" y="12.78" width="1" height="0.22" fill="#aa8630"/><rect x="4" y="12" width="1" height="0.22" fill="#aa8630"/><rect x="4" y="12.78" width="1" height="0.22" fill="#aa8630"/><rect x="5" y="12" width="1" height="0.22" fill="#aa8630"/><rect x="5" y="12.78" width="1" height="0.22" fill="#aa8630"/><rect x="6" y="12" width="1" height="0.22" fill="#aa8630"/><rect x="6" y="12.78" width="1" height="0.22" fill="#aa8630"/><rect x="7" y="12" width="1" height="0.22" fill="#aa8630"/><rect x="7" y="12.78" width="1" height="0.22" fill="#aa8630"/><rect x="8" y="12" width="1" height="0.22" fill="#aa8630"/><rect x="8" y="12.78" width="1" height="0.22" fill="#aa8630"/><rect x="9" y="12.78" width="1" height="0.22" fill="#aa8630"/><rect x="9.78" y="12" width="0.22" height="1" fill="#aa8630"/><rect x="9" y="12" width="0.22" height="0.22" fill="#aa8630"/><rect x="10" y="12.84" width="1" height="0.16" fill="#aa8630"/><rect x="11" y="12.84" width="1" height="0.16" fill="#aa8630"/><rect x="13" y="12.84" width="1" height="0.16" fill="#aa8630"/><rect x="14" y="12.84" width="1" height="0.16" fill="#aa8630"/><rect x="15" y="12.84" width="1" height="0.16" fill="#aa8630"/><rect x="15.84" y="12" width="0.16" height="1" fill="#aa8630"/><rect x="0" y="13" width="0.16" height="1" fill="#aa8630"/><rect x="9.84" y="13" width="0.16" height="1" fill="#aa8630"/><rect x="0" y="14.84" width="1" height="0.16" fill="#aa8630"/><rect x="0" y="14" width="0.16" height="1" fill="#aa8630"/><rect x="1" y="14.84" width="1" height="0.16" fill="#aa8630"/><rect x="2" y="14.84" width="1" height="0.16" fill="#aa8630"/><rect x="3" y="14.84" width="1" height="0.16" fill="#aa8630"/><rect x="4" y="14.84" width="1" height="0.16" fill="#aa8630"/><rect x="5" y="14.84" width="1" height="0.16" fill="#aa8630"/><rect x="6" y="14.84" width="1" height="0.16" fill="#aa8630"/><rect x="7" y="14.84" width="1" height="0.16" fill="#aa8630"/><rect x="8" y="14.84" width="1" height="0.16" fill="#aa8630"/><rect x="9" y="14.84" width="1" height="0.16" fill="#aa8630"/><rect x="9.84" y="14" width="0.16" height="1" fill="#aa8630"/><rect x="0" y="0.04" width="1" height="0.062" fill="#c8a248"/><rect x="0" y="0.189" width="1" height="0.031" fill="#6e5018"/><rect x="0.04" y="0" width="0.062" height="1" fill="#c8a248"/><rect x="0.189" y="0" width="0.031" height="1" fill="#6e5018"/><rect x="1" y="0.04" width="1" height="0.062" fill="#c8a248"/><rect x="1" y="0.189" width="1" height="0.031" fill="#6e5018"/><rect x="1" y="0.82" width="1" height="0.062" fill="#c8a248"/><rect x="1" y="0.969" width="1" height="0.031" fill="#6e5018"/><rect x="2" y="0.04" width="1" height="0.062" fill="#c8a248"/><rect x="2" y="0.189" width="1" height="0.031" fill="#6e5018"/><rect x="2" y="0.82" width="1" height="0.062" fill="#c8a248"/><rect x="2" y="0.969" width="1" height="0.031" fill="#6e5018"/><rect x="3" y="0.04" width="1" height="0.062" fill="#c8a248"/><rect x="3" y="0.189" width="1" height="0.031" fill="#6e5018"/><rect x="3" y="0.82" width="1" height="0.062" fill="#c8a248"/><rect x="3" y="0.969" width="1" height="0.031" fill="#6e5018"/><rect x="4" y="0.04" width="1" height="0.062" fill="#c8a248"/><rect x="4" y="0.189" width="1" height="0.031" fill="#6e5018"/><rect x="4" y="0.82" width="1" height="0.062" fill="#c8a248"/><rect x="4" y="0.969" width="1" height="0.031" fill="#6e5018"/><rect x="5" y="0.04" width="1" height="0.062" fill="#c8a248"/><rect x="5" y="0.189" width="1" height="0.031" fill="#6e5018"/><rect x="5" y="0.82" width="1" height="0.062" fill="#c8a248"/><rect x="5" y="0.969" width="1" height="0.031" fill="#6e5018"/><rect x="6" y="0.04" width="1" height="0.062" fill="#c8a248"/><rect x="6" y="0.189" width="1" height="0.031" fill="#6e5018"/><rect x="6" y="0.82" width="1" height="0.062" fill="#c8a248"/><rect x="6" y="0.969" width="1" height="0.031" fill="#6e5018"/><rect x="7" y="0.04" width="1" height="0.062" fill="#c8a248"/><rect x="7" y="0.189" width="1" height="0.031" fill="#6e5018"/><rect x="7" y="0.82" width="1" height="0.062" fill="#c8a248"/><rect x="7" y="0.969" width="1" height="0.031" fill="#6e5018"/><rect x="8" y="0.04" width="1" height="0.062" fill="#c8a248"/><rect x="8" y="0.189" width="1" height="0.031" fill="#6e5018"/><rect x="8" y="0.82" width="1" height="0.062" fill="#c8a248"/><rect x="8" y="0.969" width="1" height="0.031" fill="#6e5018"/><rect x="9" y="0.04" width="1" height="0.062" fill="#c8a248"/><rect x="9" y="0.189" width="1" height="0.031" fill="#6e5018"/><rect x="10" y="0.04" width="1" height="0.062" fill="#c8a248"/><rect x="10" y="0.189" width="1" height="0.031" fill="#6e5018"/><rect x="10" y="0.82" width="1" height="0.062" fill="#c8a248"/><rect x="10" y="0.969" width="1" height="0.031" fill="#6e5018"/><rect x="11" y="0.04" width="1" height="0.062" fill="#c8a248"/><rect x="11" y="0.189" width="1" height="0.031" fill="#6e5018"/><rect x="11" y="0.82" width="1" height="0.062" fill="#c8a248"/><rect x="11" y="0.969" width="1" height="0.031" fill="#6e5018"/><rect x="12" y="0.04" width="1" height="0.062" fill="#c8a248"/><rect x="12" y="0.189" width="1" height="0.031" fill="#6e5018"/><rect x="12" y="0.82" width="1" height="0.062" fill="#c8a248"/><rect x="12" y="0.969" width="1" height="0.031" fill="#6e5018"/><rect x="13" y="0.04" width="1" height="0.062" fill="#c8a248"/><rect x="13" y="0.189" width="1" height="0.031" fill="#6e5018"/><rect x="13" y="0.82" width="1" height="0.062" fill="#c8a248"/><rect x="13" y="0.969" width="1" height="0.031" fill="#6e5018"/><rect x="14" y="0.04" width="1" height="0.062" fill="#c8a248"/><rect x="14" y="0.189" width="1" height="0.031" fill="#6e5018"/><rect x="14" y="0.82" width="1" height="0.062" fill="#c8a248"/><rect x="14" y="0.969" width="1" height="0.031" fill="#6e5018"/><rect x="15" y="0.04" width="1" height="0.062" fill="#c8a248"/><rect x="15" y="0.189" width="1" height="0.031" fill="#6e5018"/><rect x="15.82" y="0" width="0.062" height="1" fill="#c8a248"/><rect x="15.969" y="0" width="0.031" height="1" fill="#6e5018"/><rect x="0.04" y="1" width="0.062" height="1" fill="#c8a248"/><rect x="0.189" y="1" width="0.031" height="1" fill="#6e5018"/><rect x="0.82" y="1" width="0.062" height="1" fill="#c8a248"/><rect x="0.969" y="1" width="0.031" height="1" fill="#6e5018"/><rect x="9.04" y="1" width="0.062" height="1" fill="#c8a248"/><rect x="9.189" y="1" width="0.031" height="1" fill="#6e5018"/><rect x="9.82" y="1" width="0.062" height="1" fill="#c8a248"/><rect x="9.969" y="1" width="0.031" height="1" fill="#6e5018"/><rect x="15.04" y="1" width="0.062" height="1" fill="#c8a248"/><rect x="15.189" y="1" width="0.031" height="1" fill="#6e5018"/><rect x="15.82" y="1" width="0.062" height="1" fill="#c8a248"/><rect x="15.969" y="1" width="0.031" height="1" fill="#6e5018"/><rect x="0.04" y="2" width="0.062" height="1" fill="#c8a248"/><rect x="0.189" y="2" width="0.031" height="1" fill="#6e5018"/><rect x="0.82" y="2" width="0.062" height="1" fill="#c8a248"/><rect x="0.969" y="2" width="0.031" height="1" fill="#6e5018"/><rect x="9.04" y="2" width="0.062" height="1" fill="#c8a248"/><rect x="9.189" y="2" width="0.031" height="1" fill="#6e5018"/><rect x="9.82" y="2" width="0.062" height="1" fill="#c8a248"/><rect x="9.969" y="2" width="0.031" height="1" fill="#6e5018"/><rect x="15.04" y="2" width="0.062" height="1" fill="#c8a248"/><rect x="15.189" y="2" width="0.031" height="1" fill="#6e5018"/><rect x="15.82" y="2" width="0.062" height="1" fill="#c8a248"/><rect x="15.969" y="2" width="0.031" height="1" fill="#6e5018"/><rect x="0.04" y="3" width="0.062" height="1" fill="#c8a248"/><rect x="0.189" y="3" width="0.031" height="1" fill="#6e5018"/><rect x="0.82" y="3" width="0.062" height="1" fill="#c8a248"/><rect x="0.969" y="3" width="0.031" height="1" fill="#6e5018"/><rect x="9.04" y="3" width="0.062" height="1" fill="#c8a248"/><rect x="9.189" y="3" width="0.031" height="1" fill="#6e5018"/><rect x="9.82" y="3" width="0.062" height="1" fill="#c8a248"/><rect x="9.969" y="3" width="0.031" height="1" fill="#6e5018"/><rect x="15.04" y="3" width="0.062" height="1" fill="#c8a248"/><rect x="15.189" y="3" width="0.031" height="1" fill="#6e5018"/><rect x="15.82" y="3" width="0.062" height="1" fill="#c8a248"/><rect x="15.969" y="3" width="0.031" height="1" fill="#6e5018"/><rect x="0.04" y="4" width="0.062" height="1" fill="#c8a248"/><rect x="0.189" y="4" width="0.031" height="1" fill="#6e5018"/><rect x="0.82" y="4" width="0.062" height="1" fill="#c8a248"/><rect x="0.969" y="4" width="0.031" height="1" fill="#6e5018"/><rect x="9.04" y="4" width="0.062" height="1" fill="#c8a248"/><rect x="9.189" y="4" width="0.031" height="1" fill="#6e5018"/><rect x="9.82" y="4" width="0.062" height="1" fill="#c8a248"/><rect x="9.969" y="4" width="0.031" height="1" fill="#6e5018"/><rect x="15.04" y="4" width="0.062" height="1" fill="#c8a248"/><rect x="15.189" y="4" width="0.031" height="1" fill="#6e5018"/><rect x="15.82" y="4" width="0.062" height="1" fill="#c8a248"/><rect x="15.969" y="4" width="0.031" height="1" fill="#6e5018"/><rect x="0.04" y="5" width="0.062" height="1" fill="#c8a248"/><rect x="0.189" y="5" width="0.031" height="1" fill="#6e5018"/><rect x="0.82" y="5" width="0.062" height="1" fill="#c8a248"/><rect x="0.969" y="5" width="0.031" height="1" fill="#6e5018"/><rect x="9" y="5.82" width="1" height="0.062" fill="#c8a248"/><rect x="9" y="5.969" width="1" height="0.031" fill="#6e5018"/><rect x="9.04" y="5" width="0.062" height="1" fill="#c8a248"/><rect x="9.189" y="5" width="0.031" height="1" fill="#6e5018"/><rect x="9.82" y="5" width="0.062" height="1" fill="#c8a248"/><rect x="9.969" y="5" width="0.031" height="1" fill="#6e5018"/><rect x="15.04" y="5" width="0.062" height="1" fill="#c8a248"/><rect x="15.189" y="5" width="0.031" height="1" fill="#6e5018"/><rect x="15.82" y="5" width="0.062" height="1" fill="#c8a248"/><rect x="15.969" y="5" width="0.031" height="1" fill="#6e5018"/><rect x="0.04" y="6" width="0.062" height="1" fill="#c8a248"/><rect x="0.189" y="6" width="0.031" height="1" fill="#6e5018"/><rect x="1" y="6.04" width="1" height="0.062" fill="#c8a248"/><rect x="1" y="6.189" width="1" height="0.031" fill="#6e5018"/><rect x="1" y="6.82" width="1" height="0.062" fill="#c8a248"/><rect x="1" y="6.969" width="1" height="0.031" fill="#6e5018"/><rect x="2" y="6.04" width="1" height="0.062" fill="#c8a248"/><rect x="2" y="6.189" width="1" height="0.031" fill="#6e5018"/><rect x="2" y="6.82" width="1" height="0.062" fill="#c8a248"/><rect x="2" y="6.969" width="1" height="0.031" fill="#6e5018"/><rect x="3" y="6.04" width="1" height="0.062" fill="#c8a248"/><rect x="3" y="6.189" width="1" height="0.031" fill="#6e5018"/><rect x="3" y="6.82" width="1" height="0.062" fill="#c8a248"/><rect x="3" y="6.969" width="1" height="0.031" fill="#6e5018"/><rect x="4" y="6.04" width="1" height="0.062" fill="#c8a248"/><rect x="4" y="6.189" width="1" height="0.031" fill="#6e5018"/><rect x="4" y="6.82" width="1" height="0.062" fill="#c8a248"/><rect x="4" y="6.969" width="1" height="0.031" fill="#6e5018"/><rect x="5" y="6.04" width="1" height="0.062" fill="#c8a248"/><rect x="5" y="6.189" width="1" height="0.031" fill="#6e5018"/><rect x="5" y="6.82" width="1" height="0.062" fill="#c8a248"/><rect x="5" y="6.969" width="1" height="0.031" fill="#6e5018"/><rect x="6" y="6.04" width="1" height="0.062" fill="#c8a248"/><rect x="6" y="6.189" width="1" height="0.031" fill="#6e5018"/><rect x="6" y="6.82" width="1" height="0.062" fill="#c8a248"/><rect x="6" y="6.969" width="1" height="0.031" fill="#6e5018"/><rect x="6.82" y="6" width="0.062" height="1" fill="#c8a248"/><rect x="6.969" y="6" width="0.031" height="1" fill="#6e5018"/><rect x="15.04" y="6" width="0.062" height="1" fill="#c8a248"/><rect x="15.189" y="6" width="0.031" height="1" fill="#6e5018"/><rect x="15.82" y="6" width="0.062" height="1" fill="#c8a248"/><rect x="15.969" y="6" width="0.031" height="1" fill="#6e5018"/><rect x="0.04" y="7" width="0.062" height="1" fill="#c8a248"/><rect x="0.189" y="7" width="0.031" height="1" fill="#6e5018"/><rect x="0.82" y="7" width="0.062" height="1" fill="#c8a248"/><rect x="0.969" y="7" width="0.031" height="1" fill="#6e5018"/><rect x="15.04" y="7" width="0.062" height="1" fill="#c8a248"/><rect x="15.189" y="7" width="0.031" height="1" fill="#6e5018"/><rect x="15.82" y="7" width="0.062" height="1" fill="#c8a248"/><rect x="15.969" y="7" width="0.031" height="1" fill="#6e5018"/><rect x="0.04" y="8" width="0.062" height="1" fill="#c8a248"/><rect x="0.189" y="8" width="0.031" height="1" fill="#6e5018"/><rect x="0.82" y="8" width="0.062" height="1" fill="#c8a248"/><rect x="0.969" y="8" width="0.031" height="1" fill="#6e5018"/><rect x="15.04" y="8" width="0.062" height="1" fill="#c8a248"/><rect x="15.189" y="8" width="0.031" height="1" fill="#6e5018"/><rect x="15.82" y="8" width="0.062" height="1" fill="#c8a248"/><rect x="15.969" y="8" width="0.031" height="1" fill="#6e5018"/><rect x="0.04" y="9" width="0.062" height="1" fill="#c8a248"/><rect x="0.189" y="9" width="0.031" height="1" fill="#6e5018"/><rect x="0.82" y="9" width="0.062" height="1" fill="#c8a248"/><rect x="0.969" y="9" width="0.031" height="1" fill="#6e5018"/><rect x="9" y="9.04" width="1" height="0.062" fill="#c8a248"/><rect x="9" y="9.189" width="1" height="0.031" fill="#6e5018"/><rect x="9.04" y="9" width="0.062" height="1" fill="#c8a248"/><rect x="9.189" y="9" width="0.031" height="1" fill="#6e5018"/><rect x="9.82" y="9" width="0.062" height="1" fill="#c8a248"/><rect x="9.969" y="9" width="0.031" height="1" fill="#6e5018"/><rect x="15.04" y="9" width="0.062" height="1" fill="#c8a248"/><rect x="15.189" y="9" width="0.031" height="1" fill="#6e5018"/><rect x="15.82" y="9" width="0.062" height="1" fill="#c8a248"/><rect x="15.969" y="9" width="0.031" height="1" fill="#6e5018"/><rect x="0.04" y="10" width="0.062" height="1" fill="#c8a248"/><rect x="0.189" y="10" width="0.031" height="1" fill="#6e5018"/><rect x="0.82" y="10" width="0.062" height="1" fill="#c8a248"/><rect x="0.969" y="10" width="0.031" height="1" fill="#6e5018"/><rect x="9.04" y="10" width="0.062" height="1" fill="#c8a248"/><rect x="9.189" y="10" width="0.031" height="1" fill="#6e5018"/><rect x="10" y="10.04" width="1" height="0.062" fill="#c8a248"/><rect x="10" y="10.189" width="1" height="0.031" fill="#6e5018"/><rect x="10" y="10.82" width="1" height="0.062" fill="#c8a248"/><rect x="10" y="10.969" width="1" height="0.031" fill="#6e5018"/><rect x="11" y="10.04" width="1" height="0.062" fill="#c8a248"/><rect x="11" y="10.189" width="1" height="0.031" fill="#6e5018"/><rect x="11" y="10.82" width="1" height="0.062" fill="#c8a248"/><rect x="11" y="10.969" width="1" height="0.031" fill="#6e5018"/><rect x="11.82" y="10" width="0.062" height="1" fill="#c8a248"/><rect x="11.969" y="10" width="0.031" height="1" fill="#6e5018"/><rect x="13" y="10.04" width="1" height="0.062" fill="#c8a248"/><rect x="13" y="10.189" width="1" height="0.031" fill="#6e5018"/><rect x="13" y="10.82" width="1" height="0.062" fill="#c8a248"/><rect x="13" y="10.969" width="1" height="0.031" fill="#6e5018"/><rect x="13.04" y="10" width="0.062" height="1" fill="#c8a248"/><rect x="13.189" y="10" width="0.031" height="1" fill="#6e5018"/><rect x="14" y="10.04" width="1" height="0.062" fill="#c8a248"/><rect x="14" y="10.189" width="1" height="0.031" fill="#6e5018"/><rect x="14" y="10.82" width="1" height="0.062" fill="#c8a248"/><rect x="14" y="10.969" width="1" height="0.031" fill="#6e5018"/><rect x="15" y="10.82" width="1" height="0.062" fill="#c8a248"/><rect x="15" y="10.969" width="1" height="0.031" fill="#6e5018"/><rect x="15.82" y="10" width="0.062" height="1" fill="#c8a248"/><rect x="15.969" y="10" width="0.031" height="1" fill="#6e5018"/><rect x="0.04" y="11" width="0.062" height="1" fill="#c8a248"/><rect x="0.189" y="11" width="0.031" height="1" fill="#6e5018"/><rect x="0.82" y="11" width="0.062" height="1" fill="#c8a248"/><rect x="0.969" y="11" width="0.031" height="1" fill="#6e5018"/><rect x="9.04" y="11" width="0.062" height="1" fill="#c8a248"/><rect x="9.189" y="11" width="0.031" height="1" fill="#6e5018"/><rect x="9.82" y="11" width="0.062" height="1" fill="#c8a248"/><rect x="9.969" y="11" width="0.031" height="1" fill="#6e5018"/><rect x="15.869" y="11" width="0.045" height="1" fill="#c8a248"/><rect x="15.978" y="11" width="0.022" height="1" fill="#6e5018"/><rect x="0" y="12.82" width="1" height="0.062" fill="#c8a248"/><rect x="0" y="12.969" width="1" height="0.031" fill="#6e5018"/><rect x="0.04" y="12" width="0.062" height="1" fill="#c8a248"/><rect x="0.189" y="12" width="0.031" height="1" fill="#6e5018"/><rect x="1" y="12.04" width="1" height="0.062" fill="#c8a248"/><rect x="1" y="12.189" width="1" height="0.031" fill="#6e5018"/><rect x="1" y="12.82" width="1" height="0.062" fill="#c8a248"/><rect x="1" y="12.969" width="1" height="0.031" fill="#6e5018"/><rect x="2" y="12.04" width="1" height="0.062" fill="#c8a248"/><rect x="2" y="12.189" width="1" height="0.031" fill="#6e5018"/><rect x="2" y="12.82" width="1" height="0.062" fill="#c8a248"/><rect x="2" y="12.969" width="1" height="0.031" fill="#6e5018"/><rect x="3" y="12.04" width="1" height="0.062" fill="#c8a248"/><rect x="3" y="12.189" width="1" height="0.031" fill="#6e5018"/><rect x="3" y="12.82" width="1" height="0.062" fill="#c8a248"/><rect x="3" y="12.969" width="1" height="0.031" fill="#6e5018"/><rect x="4" y="12.04" width="1" height="0.062" fill="#c8a248"/><rect x="4" y="12.189" width="1" height="0.031" fill="#6e5018"/><rect x="4" y="12.82" width="1" height="0.062" fill="#c8a248"/><rect x="4" y="12.969" width="1" height="0.031" fill="#6e5018"/><rect x="5" y="12.04" width="1" height="0.062" fill="#c8a248"/><rect x="5" y="12.189" width="1" height="0.031" fill="#6e5018"/><rect x="5" y="12.82" width="1" height="0.062" fill="#c8a248"/><rect x="5" y="12.969" width="1" height="0.031" fill="#6e5018"/><rect x="6" y="12.04" width="1" height="0.062" fill="#c8a248"/><rect x="6" y="12.189" width="1" height="0.031" fill="#6e5018"/><rect x="6" y="12.82" width="1" height="0.062" fill="#c8a248"/><rect x="6" y="12.969" width="1" height="0.031" fill="#6e5018"/><rect x="7" y="12.04" width="1" height="0.062" fill="#c8a248"/><rect x="7" y="12.189" width="1" height="0.031" fill="#6e5018"/><rect x="7" y="12.82" width="1" height="0.062" fill="#c8a248"/><rect x="7" y="12.969" width="1" height="0.031" fill="#6e5018"/><rect x="8" y="12.04" width="1" height="0.062" fill="#c8a248"/><rect x="8" y="12.189" width="1" height="0.031" fill="#6e5018"/><rect x="8" y="12.82" width="1" height="0.062" fill="#c8a248"/><rect x="8" y="12.969" width="1" height="0.031" fill="#6e5018"/><rect x="9" y="12.82" width="1" height="0.062" fill="#c8a248"/><rect x="9" y="12.969" width="1" height="0.031" fill="#6e5018"/><rect x="9.82" y="12" width="0.062" height="1" fill="#c8a248"/><rect x="9.969" y="12" width="0.031" height="1" fill="#6e5018"/><rect x="10" y="12.869" width="1" height="0.045" fill="#c8a248"/><rect x="10" y="12.978" width="1" height="0.022" fill="#6e5018"/><rect x="11" y="12.869" width="1" height="0.045" fill="#c8a248"/><rect x="11" y="12.978" width="1" height="0.022" fill="#6e5018"/><rect x="13" y="12.869" width="1" height="0.045" fill="#c8a248"/><rect x="13" y="12.978" width="1" height="0.022" fill="#6e5018"/><rect x="14" y="12.869" width="1" height="0.045" fill="#c8a248"/><rect x="14" y="12.978" width="1" height="0.022" fill="#6e5018"/><rect x="15" y="12.869" width="1" height="0.045" fill="#c8a248"/><rect x="15" y="12.978" width="1" height="0.022" fill="#6e5018"/><rect x="15.869" y="12" width="0.045" height="1" fill="#c8a248"/><rect x="15.978" y="12" width="0.022" height="1" fill="#6e5018"/><rect x="0.029" y="13" width="0.045" height="1" fill="#c8a248"/><rect x="0.138" y="13" width="0.022" height="1" fill="#6e5018"/><rect x="9.869" y="13" width="0.045" height="1" fill="#c8a248"/><rect x="9.978" y="13" width="0.022" height="1" fill="#6e5018"/><rect x="0" y="14.869" width="1" height="0.045" fill="#c8a248"/><rect x="0" y="14.978" width="1" height="0.022" fill="#6e5018"/><rect x="0.029" y="14" width="0.045" height="1" fill="#c8a248"/><rect x="0.138" y="14" width="0.022" height="1" fill="#6e5018"/><rect x="1" y="14.869" width="1" height="0.045" fill="#c8a248"/><rect x="1" y="14.978" width="1" height="0.022" fill="#6e5018"/><rect x="2" y="14.869" width="1" height="0.045" fill="#c8a248"/><rect x="2" y="14.978" width="1" height="0.022" fill="#6e5018"/><rect x="3" y="14.869" width="1" height="0.045" fill="#c8a248"/><rect x="3" y="14.978" width="1" height="0.022" fill="#6e5018"/><rect x="4" y="14.869" width="1" height="0.045" fill="#c8a248"/><rect x="4" y="14.978" width="1" height="0.022" fill="#6e5018"/><rect x="5" y="14.869" width="1" height="0.045" fill="#c8a248"/><rect x="5" y="14.978" width="1" height="0.022" fill="#6e5018"/><rect x="6" y="14.869" width="1" height="0.045" fill="#c8a248"/><rect x="6" y="14.978" width="1" height="0.022" fill="#6e5018"/><rect x="7" y="14.869" width="1" height="0.045" fill="#c8a248"/><rect x="7" y="14.978" width="1" height="0.022" fill="#6e5018"/><rect x="8" y="14.869" width="1" height="0.045" fill="#c8a248"/><rect x="8" y="14.978" width="1" height="0.022" fill="#6e5018"/><rect x="9" y="14.869" width="1" height="0.045" fill="#c8a248"/><rect x="9" y="14.978" width="1" height="0.022" fill="#6e5018"/><rect x="9.869" y="14" width="0.045" height="1" fill="#c8a248"/><rect x="9.978" y="14" width="0.022" height="1" fill="#6e5018"/><rect x="10" y="11" width="2" height="0.16" fill="#aa8630"/><rect x="10" y="12.84" width="2" height="0.16" fill="#aa8630"/><rect x="10" y="11" width="0.16" height="2" fill="#aa8630"/><rect x="11.84" y="11" width="0.16" height="2" fill="#aa8630"/><rect x="13" y="11" width="3" height="0.16" fill="#aa8630"/><rect x="13" y="12.84" width="3" height="0.16" fill="#aa8630"/><rect x="13" y="11" width="0.16" height="2" fill="#aa8630"/><rect x="15.84" y="11" width="0.16" height="2" fill="#aa8630"/><rect x="0" y="12.88" width="10" height="0.24" fill="#aa8630"/><rect x="0" y="12.93" width="10" height="0.07" fill="#c8a248"/><rect x="0" y="14.84" width="10" height="0.16" fill="#6e5018"/><rect x="1" y="1" width="0.22" height="1.82" fill="#a8842f"/><rect x="1.06" y="1" width="0.07" height="1.82" fill="#c9a850"/><rect x="8.78" y="1" width="0.22" height="0.82" fill="#a8842f"/><rect x="8.84" y="1" width="0.07" height="0.82" fill="#c9a850"/><rect x="10" y="1" width="0.22" height="1.82" fill="#a8842f"/><rect x="10.06" y="1" width="0.07" height="1.82" fill="#c9a850"/><rect x="14.78" y="1" width="0.22" height="0.82" fill="#a8842f"/><rect x="14.84" y="1" width="0.07" height="0.82" fill="#c9a850"/><rect x="1" y="7" width="0.22" height="1.82" fill="#a8842f"/><rect x="1.06" y="7" width="0.07" height="1.82" fill="#c9a850"/><rect x="6.78" y="7" width="0.22" height="1.82" fill="#a8842f"/><rect x="6.84" y="7" width="0.07" height="1.82" fill="#c9a850"/><rect x="9" y="6" width="0.22" height="1.92" fill="#a8842f"/><rect x="9.06" y="6" width="0.07" height="1.92" fill="#c9a850"/><rect x="9.78" y="6" width="0.22" height="1.92" fill="#a8842f"/><rect x="9.84" y="6" width="0.07" height="1.92" fill="#c9a850"/><rect x="9" y="7.8" width="1" height="0.2" fill="#aa8630"/><rect x="9" y="7.84" width="1" height="0.06" fill="#c8a248"/><path d="M2.15 2.52V1.72a.4 .4 0 0 1 .8 0V2.52z" fill="#d8c08a"/><path d="M2.23 1.7a.32 .3 0 0 1 .64 0z" fill="#dde3ea"/><rect x="2.23" y="1.8" width="0.28" height="0.66" fill="#e4e9f0"/><rect x="2.59" y="1.8" width="0.28" height="0.66" fill="#e4e9f0"/><rect x="2.23" y="1.96" width="0.28" height="0.06" fill="#a8967a"/><rect x="2.59" y="1.96" width="0.28" height="0.06" fill="#a8967a"/><rect x="2.23" y="2.16" width="0.28" height="0.06" fill="#a8967a"/><rect x="2.59" y="2.16" width="0.28" height="0.06" fill="#a8967a"/><rect x="2.23" y="2.36" width="0.28" height="0.06" fill="#a8967a"/><rect x="2.59" y="2.36" width="0.28" height="0.06" fill="#a8967a"/><path d="M6.15 2.52V1.72a.4 .4 0 0 1 .8 0V2.52z" fill="#d8c08a"/><path d="M6.23 1.7a.32 .3 0 0 1 .64 0z" fill="#dde3ea"/><rect x="6.23" y="1.8" width="0.28" height="0.66" fill="#e4e9f0"/><rect x="6.59" y="1.8" width="0.28" height="0.66" fill="#e4e9f0"/><rect x="6.23" y="1.96" width="0.28" height="0.06" fill="#a8967a"/><rect x="6.59" y="1.96" width="0.28" height="0.06" fill="#a8967a"/><rect x="6.23" y="2.16" width="0.28" height="0.06" fill="#a8967a"/><rect x="6.59" y="2.16" width="0.28" height="0.06" fill="#a8967a"/><rect x="6.23" y="2.36" width="0.28" height="0.06" fill="#a8967a"/><rect x="6.59" y="2.36" width="0.28" height="0.06" fill="#a8967a"/><rect x="1.02" y="3" width="0.94" height="0.62" fill="#c8b488"/><rect x="1.02" y="3.05" width="0.94" height="0.1" fill="#b79a62"/><rect x="1.02" y="3.22" width="0.94" height="0.08" fill="#b79a62"/><rect x="1.05" y="3.32" width="0.9" height="0.36" fill="#e8e0cc" rx=".12"/><rect x="1.02" y="3.62" width="0.94" height="1.36" fill="#64522e"/><rect x="1.02" y="3.62" width="0.94" height="0.12" fill="#857140"/><rect x="1.02" y="4.78" width="0.94" height="0.2" fill="#544420"/><rect x="2.04" y="3.02" width="0.92" height="0.68" fill="#d99a5e"/><rect x="2.04" y="3.7" width="0.92" height="0.26" fill="#a8683a"/><ellipse cx="2.5" cy="3.5" rx=".36" ry=".14" fill="#f3efe6"/><ellipse cx="2.5" cy="3.22" rx=".26" ry=".22" fill="#4f8a2c"/><circle cx="2.42" cy="3.14" r=".08" fill="#e8508a"/><circle cx="2.6" cy="3.2" r=".08" fill="#f0a030"/><circle cx="2.5" cy="3.3" r=".07" fill="#e8508a"/><rect x="3.02" y="3" width="0.94" height="0.62" fill="#c8b488"/><rect x="3.02" y="3.05" width="0.94" height="0.1" fill="#b79a62"/><rect x="3.02" y="3.22" width="0.94" height="0.08" fill="#b79a62"/><rect x="3.05" y="3.32" width="0.9" height="0.36" fill="#e8e0cc" rx=".12"/><rect x="3.02" y="3.62" width="0.94" height="1.36" fill="#64522e"/><rect x="3.02" y="3.62" width="0.94" height="0.12" fill="#857140"/><rect x="3.02" y="4.78" width="0.94" height="0.2" fill="#544420"/><rect x="4.28" y="3.5" width="0.1" height="0.4" fill="#a87848"/><rect x="4.68" y="3.5" width="0.1" height="0.4" fill="#a87848"/><ellipse cx="4.53" cy="3.46" rx=".33" ry=".24" fill="#c9a06a"/><ellipse cx="4.53" cy="3.38" rx=".33" ry=".22" fill="#e6caa0"/><rect x="5.02" y="3.1" width="0.96" height="0.62" fill="#dc9a62"/><rect x="5.02" y="3.1" width="0.96" height="0.08" fill="#e9b27c"/><rect x="5.02" y="3.72" width="0.96" height="0.12" fill="#a5673a"/><rect x="5.06" y="3.84" width="0.1" height="0.12" fill="#8a5028"/><rect x="5.84" y="3.84" width="0.1" height="0.12" fill="#8a5028"/><rect x="6.28" y="3.5" width="0.1" height="0.4" fill="#a87848"/><rect x="6.68" y="3.5" width="0.1" height="0.4" fill="#a87848"/><ellipse cx="6.53" cy="3.46" rx=".33" ry=".24" fill="#c9a06a"/><ellipse cx="6.53" cy="3.38" rx=".33" ry=".22" fill="#e6caa0"/><rect x="7" y="2" width="2" height="0.62" fill="#d0aa6c"/><rect x="7" y="2" width="2" height="0.1" fill="#e2c48c"/><rect x="7.97" y="2" width="0.05" height="0.62" fill="#b08c50"/><rect x="7" y="2.62" width="1" height="1.33" fill="#2f251a"/><rect x="7.08" y="2.7" width="0.84" height="0.3" fill="#d8c090"/><rect x="7.1" y="3.15" width="0.8" height="0.28" fill="#4a3e2c"/><rect x="7.1" y="3.55" width="0.8" height="0.28" fill="#40342a"/><rect x="8" y="2.62" width="1" height="1.33" fill="#c8a46a"/><rect x="8.08" y="2.72" width="0.38" height="1.1" fill="#ddc08a"/><rect x="8.54" y="2.72" width="0.38" height="1.1" fill="#ddc08a"/><rect x="8.47" y="2.62" width="0.06" height="1.33" fill="#8a6a3a"/><rect x="1.02" y="9" width="0.94" height="0.62" fill="#c8b488"/><rect x="1.02" y="9.05" width="0.94" height="0.1" fill="#b79a62"/><rect x="1.02" y="9.22" width="0.94" height="0.08" fill="#b79a62"/><rect x="1.05" y="9.32" width="0.9" height="0.36" fill="#e8e0cc" rx=".12"/><rect x="1.02" y="9.62" width="0.94" height="1.36" fill="#64522e"/><rect x="1.02" y="9.62" width="0.94" height="0.12" fill="#857140"/><rect x="1.02" y="10.78" width="0.94" height="0.2" fill="#544420"/><rect x="2.04" y="9.02" width="0.92" height="0.68" fill="#d99a5e"/><rect x="2.04" y="9.7" width="0.92" height="0.26" fill="#a8683a"/><ellipse cx="2.5" cy="9.5" rx=".36" ry=".14" fill="#f3efe6"/><ellipse cx="2.5" cy="9.22" rx=".26" ry=".22" fill="#4f8a2c"/><circle cx="2.42" cy="9.14" r=".08" fill="#e8508a"/><circle cx="2.6" cy="9.2" r=".08" fill="#f0a030"/><circle cx="2.5" cy="9.3" r=".07" fill="#e8508a"/><rect x="3.02" y="9" width="0.94" height="0.62" fill="#c8b488"/><rect x="3.02" y="9.05" width="0.94" height="0.1" fill="#b79a62"/><rect x="3.02" y="9.22" width="0.94" height="0.08" fill="#b79a62"/><rect x="3.05" y="9.32" width="0.9" height="0.36" fill="#e8e0cc" rx=".12"/><rect x="3.02" y="9.62" width="0.94" height="1.36" fill="#64522e"/><rect x="3.02" y="9.62" width="0.94" height="0.12" fill="#857140"/><rect x="3.02" y="10.78" width="0.94" height="0.2" fill="#544420"/><rect x="4.28" y="9.5" width="0.1" height="0.4" fill="#a87848"/><rect x="4.68" y="9.5" width="0.1" height="0.4" fill="#a87848"/><ellipse cx="4.53" cy="9.46" rx=".33" ry=".24" fill="#c9a06a"/><ellipse cx="4.53" cy="9.38" rx=".33" ry=".22" fill="#e6caa0"/><rect x="5.02" y="9.1" width="0.96" height="0.62" fill="#dc9a62"/><rect x="5.02" y="9.1" width="0.96" height="0.08" fill="#e9b27c"/><rect x="5.02" y="9.72" width="0.96" height="0.12" fill="#a5673a"/><rect x="5.06" y="9.84" width="0.1" height="0.12" fill="#8a5028"/><rect x="5.84" y="9.84" width="0.1" height="0.12" fill="#8a5028"/><rect x="6.28" y="9.5" width="0.1" height="0.4" fill="#a87848"/><rect x="6.68" y="9.5" width="0.1" height="0.4" fill="#a87848"/><ellipse cx="6.53" cy="9.46" rx=".33" ry=".24" fill="#c9a06a"/><ellipse cx="6.53" cy="9.38" rx=".33" ry=".22" fill="#e6caa0"/><rect x="8" y="11.05" width="0.98" height="0.95" fill="#d8ac72"/><rect x="8" y="11.05" width="0.98" height="0.08" fill="#b88a50"/><rect x="8" y="11.55" width="0.98" height="0.07" fill="#a87a44"/><rect x="8" y="11.05" width="0.07" height="0.95" fill="#b88a50"/><rect x="8.9" y="11.05" width="0.08" height="0.95" fill="#b88a50"/><rect x="10.2" y="1.15" width="0.72" height="1.42" fill="#8c5c3a"/><rect x="10.3" y="1.5" width="0.52" height="0.8" fill="#2c2016"/><rect x="10.36" y="1.62" width="0.4" height="0.26" fill="#d8c070"/><rect x="10.14" y="1.3" width="0.84" height="0.1" fill="#a87850"/><rect x="10.14" y="2.36" width="0.84" height="0.1" fill="#a87850"/><rect x="12.2" y="1.15" width="0.72" height="0.78" fill="#7a2e20"/><rect x="12.3" y="1.25" width="0.52" height="0.58" fill="#c8c0c4"/><rect x="12.48" y="1.3" width="0.2" height="0.3" fill="#3c8c3c"/><rect x="12.36" y="1.6" width="0.4" height="0.18" fill="#b03038"/><path d="M13.18 2.52V1.72a.4 .4 0 0 1 .8 0V2.52z" fill="#d8c08a"/><path d="M13.26 1.7a.32 .3 0 0 1 .64 0z" fill="#dde3ea"/><rect x="13.26" y="1.8" width="0.28" height="0.66" fill="#e4e9f0"/><rect x="13.62" y="1.8" width="0.28" height="0.66" fill="#e4e9f0"/><rect x="13.26" y="1.96" width="0.28" height="0.06" fill="#a8967a"/><rect x="13.62" y="1.96" width="0.28" height="0.06" fill="#a8967a"/><rect x="13.26" y="2.16" width="0.28" height="0.06" fill="#a8967a"/><rect x="13.62" y="2.16" width="0.28" height="0.06" fill="#a8967a"/><rect x="13.26" y="2.36" width="0.28" height="0.06" fill="#a8967a"/><rect x="13.62" y="2.36" width="0.28" height="0.06" fill="#a8967a"/><rect x="14" y="2" width="1" height="0.62" fill="#d0aa6c"/><rect x="14" y="2" width="1" height="0.1" fill="#e2c48c"/><rect x="14" y="2.62" width="1" height="1.33" fill="#b88c50"/><rect x="14.08" y="2.7" width="0.84" height="0.34" fill="#6a4c28"/><rect x="14.08" y="3.1" width="0.84" height="0.34" fill="#6a4c28"/><rect x="14.14" y="2.76" width="0.3" height="0.24" fill="#e8eef6"/><rect x="14.56" y="2.78" width="0.28" height="0.2" fill="#e8c060"/><rect x="14.14" y="3.16" width="0.3" height="0.24" fill="#e8eef6"/><rect x="14.54" y="3.16" width="0.32" height="0.24" fill="#b8cce8"/><rect x="14.08" y="3.52" width="0.84" height="0.36" fill="#d8b474"/><rect x="14.16" y="3.6" width="0.3" height="0.2" fill="#a87c40"/><rect x="14.54" y="3.6" width="0.3" height="0.2" fill="#a87c40"/><path d="M10.12 3.95V3.3q0-.25.25-.25h.3q.25 0 .25.25V3.95z" fill="#cdaa5c"/><rect x="10.12" y="3.1" width="0.8" height="0.85" fill="#cdaa5c" rx=".15"/><rect x="10.3" y="3.2" width="0.3" height="0.6" fill="#dfc47c" rx=".1"/><rect x="12.28" y="3.5" width="0.1" height="0.4" fill="#a87848"/><rect x="12.68" y="3.5" width="0.1" height="0.4" fill="#a87848"/><ellipse cx="12.53" cy="3.46" rx=".33" ry=".24" fill="#c9a06a"/><ellipse cx="12.53" cy="3.38" rx=".33" ry=".22" fill="#e6caa0"/><ellipse cx="13.58" cy="3.5" rx=".4" ry=".46" fill="#b8843f"/><rect x="13.2" y="3.3" width="0.76" height="0.08" fill="#5a3c1a"/><rect x="13.2" y="3.62" width="0.76" height="0.08" fill="#5a3c1a"/><ellipse cx="13.58" cy="3.12" rx=".3" ry=".1" fill="#d8a860"/><rect x="12.05" y="4.05" width="0.95" height="0.95" fill="#3a2218"/><rect x="12.4" y="4.2" width="0.25" height="0.25" fill="#e8b898"/><rect x="12.38" y="4.15" width="0.29" height="0.1" fill="#a04828"/><rect x="12.34" y="4.45" width="0.37" height="0.3" fill="#2a2430"/><rect x="12.47" y="4.45" width="0.1" height="0.2" fill="#e8e8e8"/><rect x="12.38" y="4.75" width="0.12" height="0.16" fill="#1c1820"/><rect x="12.54" y="4.75" width="0.12" height="0.16" fill="#1c1820"/><rect x="12.08" y="4.08" width=".9" height=".9" fill="none" stroke="#fff" stroke-width=".07"/><rect x="13.1" y="5.26" width="0.42" height="0.6" fill="#e6e6e2"/><rect x="13.54" y="5.26" width="0.42" height="0.6" fill="#dcdcd8"/><rect x="13.5" y="5.26" width="0.05" height="0.6" fill="#a0a09c"/><path d="M14.42 5.82L14.8 5.12" stroke="#30b0d8" stroke-width=".14" fill="none"/><circle cx="14.42" cy="5.8" r=".1" fill="#2038a0"/></g></svg>
<div class="t" style="left:1275px;top:429px">坐标:</div>
<div class="t" style="left:1300px;top:429px;width:74px;text-align:right">14,5</div>
<div class="a" style="left:1377px;top:100px;width:1.500px;height:845px;background:#111"></div>
<div class="bar" style="left:318px;top:508px;width:1059px;height:18px"></div>
<div class="tab" style="left:319px;top:508px;width:68px;height:18px"></div>
<div class="t" style="left:325px;top:511px;color:#bdbdbd">事件动作</div>
<div class="t" style="left:319px;top:527px;color:#c4c4c4">执行内容</div>
<div class="a" style="left:319px;top:542px;width:1055px;height:405px;background:#3a3a3a"></div>
<div class="er" style="top:542px;height:21px"><div class="t" style="left:7px;top:3px">◆ 文字: 旅馆的店主, , , 窗口, 下</div></div>
<div class="er" style="top:563px;height:25px"><div class="t" style="left:20px;top:5px">◇#</div></div>
<div class="er" style="top:588px;height:22px"><div class="t" style="left:7px;top:3px">◆选择项: (窗口, 左, 选项#3, 选项#1)</div></div>
<div class="er" style="top:610px;height:22px"><div class="t" style="left:7px;top:3px">◇#1「</div></div>
<div class="er" style="top:632px;height:21px"><div class="t" style="left:20px;top:3px">◆分支设定 : 金钱所持金额 <span style="font-size:8px;position:relative;top:0px">≧</span> 20</div></div>
<div class="er" style="top:653px;height:21px"><div class="t" style="left:34px;top:3px">◆保存背景音乐</div></div>
<div class="er" style="top:674px;height:21px"><div class="t" style="left:34px;top:3px">◆背景音乐淡出 : 1 秒</div></div>
<div class="er" style="top:695px;height:21px"><div class="t" style="left:34px;top:3px">◆画面淡出</div></div>
<div class="er" style="top:716px;height:21px"><div class="t" style="left:34px;top:3px">◆等待 : 60 帧</div></div>
<div class="er" style="top:737px;height:21px"><div class="t" style="left:34px;top:3px">◆演奏音效 : Inn1 (100 ,100 ,0)</div></div>
<div class="er" style="top:758px;height:21px"><div class="t" style="left:34px;top:3px">◆等待 : 300 帧</div></div>
<div class="er" style="top:779px;height:21px"><div class="t" style="left:34px;top:3px">◆画面淡入</div></div>
<div class="er" style="top:800px;height:21px"><div class="t" style="left:34px;top:3px">◆等待 : 60 帧</div></div>
<div class="er" style="top:821px;height:21px"><div class="t" style="left:34px;top:3px">◆再开背景音乐</div></div>
<div class="er" style="top:842px;height:21px"><div class="t" style="left:34px;top:3px">◆更改状态 : 队伍全体,&nbsp; - 魅惑</div></div>
<div class="er" style="top:863px;height:21px"><div class="t" style="left:34px;top:3px">◆更改状态 : 队伍全体,&nbsp; - 睡眠</div></div>
<div class="er" style="top:884px;height:21px"><div class="t" style="left:34px;top:3px">◆更改状态 : 队伍全体,&nbsp; - 中毒</div></div>
<div class="er" style="top:905px;height:21px"><div class="t" style="left:34px;top:3px">◆更改状态 : 队伍全体,&nbsp; - 黑暗</div></div>
<div class="er" style="top:926px;height:22px"><div class="t" style="left:34px;top:3px">◆更改状态 : 队伍全体,&nbsp; - 沉默</div></div>
<div class="inp" style="left:361px;top:565px;width:997px;height:19px;padding-top:2px">住宿一次需要20\G，要住吗?</div>
<div class="inp" style="left:365px;top:611px;width:941px;height:18px;padding-top:1px">是</div>
<div class="t" style="left:1307px;top:613px">」的时候</div>
<div class="a" style="left:1364px;top:542px;width:10px;height:405px;background:#353535"></div>
<div class="thumb" style="left:1366px;top:559px;width:9px;height:187px"></div>
<div class="arr" style="left:1366px;top:547px;border-left:4px solid transparent;border-right:4px solid transparent;border-bottom:5px solid #c8c8c8"></div>
<div class="arr" style="left:1366px;top:935px;border-left:4px solid transparent;border-right:4px solid transparent;border-top:5px solid #c8c8c8"></div>
<div class="bar" style="left:1379px;top:100px;width:539px;height:19px"></div>
<div class="tab" style="left:1379px;top:100px;width:89px;height:19px"></div>
<div class="t" style="left:1386px;top:103px">RPG Setting</div>
<div class="a" style="left:1379px;top:119px;width:527px;height:20px;background:#3e3e3e;border-bottom:1px solid #303030"></div>
<div class="arr" style="left:1397px;top:124px;border-left:4.5px solid transparent;border-right:4.5px solid transparent;border-top:8px solid #6f6f6f"></div>
<div class="t" style="left:1418px;top:121px">基础设置</div>
<div class="t" style="left:1418px;top:143px">ID</div>
<div class="t" style="left:1610px;top:142px">1228</div>
<div class="t" style="left:1418px;top:164px">名称</div>
<div class="inp" style="left:1609px;top:164px;width:289px;height:18px;padding-top:2px">旅馆的店主</div>
<div class="t" style="left:1418px;top:188px">位置</div>
<div class="t" style="left:1613px;top:188px">X</div>
<div class="inp" style="left:1627px;top:185px;width:127px;height:18px;padding-top:1px">14</div>
<div class="t" style="left:1761px;top:188px">Y</div>
<div class="inp" style="left:1775px;top:185px;width:120px;height:18px;padding-top:1px">5</div>
<div class="t" style="left:1418px;top:210px">备注</div>
<div class="inp" style="left:1609px;top:210px;width:289px;height:19px"></div>
<div class="a" style="left:1379px;top:231px;width:527px;height:20px;background:#3e3e3e;border-bottom:1px solid #303030"></div>
<div class="arr" style="left:1397px;top:236px;border-left:4.5px solid transparent;border-right:4.5px solid transparent;border-top:8px solid #6f6f6f"></div>
<div class="t" style="left:1418px;top:233px">页面设定</div>
<div class="t" style="left:1418px;top:256px">章</div>
<div class="btn" style="left:1612px;top:253px;width:283px;height:20px">0001 : 无</div>
<div class="t" style="left:1418px;top:280px">节</div>
<div class="btn" style="left:1612px;top:277px;width:283px;height:20px">0001 : 无</div>
<div class="arr" style="left:1412px;top:304px;border-left:4.5px solid transparent;border-right:4.5px solid transparent;border-top:8px solid #6f6f6f"></div>
<div class="t" style="left:1434px;top:301px">模板</div>
<div class="t" style="left:1434px;top:320px">读取模板</div>
<div class="btn" style="left:1437px;top:338px;width:226px;height:20px">导入</div>
<div class="btn" style="left:1669px;top:338px;width:226px;height:20px">导出</div>
<div class="arr" style="left:1412px;top:365px;border-left:4.5px solid transparent;border-right:4.5px solid transparent;border-top:8px solid #6f6f6f"></div>
<div class="t" style="left:1434px;top:362px">出现条件</div>
<div class="a" style="left:1437px;top:385px;width:14px;height:14px;background:#2a2a2a;border:1px solid #222;border-top-color:#111;border-radius:2px"></div>
<div class="t" style="left:1455px;top:384px">开关 1</div>
<div class="btn dis" style="left:1623px;top:381px;width:272px;height:20px">0001 :</div>
<div class="a" style="left:1437px;top:409px;width:14px;height:14px;background:#2a2a2a;border:1px solid #222;border-top-color:#111;border-radius:2px"></div>
<div class="t" style="left:1455px;top:408px">开关 2</div>
<div class="btn dis" style="left:1623px;top:405px;width:272px;height:20px">0001 :</div>
<div class="a" style="left:1906px;top:119px;width:12px;height:305px;background:#353535"></div>
<div class="thumb" style="left:1908px;top:136px;width:10px;height:76px"></div>
<div class="arr" style="left:1909px;top:124px;border-left:4px solid transparent;border-right:4px solid transparent;border-bottom:5px solid #c8c8c8"></div>
<div class="arr" style="left:1909px;top:417px;border-left:4px solid transparent;border-right:4px solid transparent;border-top:5px solid #c8c8c8"></div>
<div class="bar" style="left:1379px;top:428px;width:539px;height:21px"></div><div class="a" style="left:1379px;top:428px;width:539px;height:2px;background:#191512"></div>
<div class="tab" style="left:1383px;top:430px;width:65px;height:19px;border-top:2px solid #2f6496;border-radius:0"></div>
<div class="t" style="left:1386px;top:434px;color:#bdbdbd">事件命令</div>
<div class="t" style="left:1388px;top:451px">◆ 显示内容</div>
<div class="btn" style="left:1390px;top:469px;width:201px;height:20px">预览</div>
<div class="t" style="left:1388px;top:496px">角色指定</div>
<div class="btn" style="left:1594px;top:493px;width:301px;height:20px">0001 : 无</div>
<div class="t" style="left:1388px;top:520px">图片</div>
<div class="btn" style="left:1594px;top:517px;width:301px;height:20px">选择图片文件</div>
<div class="btn" style="left:1594px;top:540px;width:301px;height:20px">导入</div>
<div class="btn" style="left:1594px;top:702px;width:301px;height:20px">选择图片文件</div>
<div class="btn" style="left:1594px;top:725px;width:301px;height:20px">导入</div>
<div class="t" style="left:1388px;top:890px">名称</div>
<div class="inp" style="left:1415px;top:888px;width:483px;height:18px;padding-top:1px">旅馆的店主</div>
<div class="t" style="left:1388px;top:912px">显示名称</div>
<div class="a" style="left:1600px;top:915px;width:12px;height:12px;border-radius:6px;background:#2a2a2a;border:1px solid #222"></div>
<div class="a" style="left:1603.500px;top:918.500px;width:5px;height:5px;border-radius:3px;background:#d8d8d8"></div>
<div class="t" style="left:1618px;top:913px">是</div>
<div class="a" style="left:1636px;top:915px;width:12px;height:12px;border-radius:6px;background:#2a2a2a;border:1px solid #222"></div>
<div class="t" style="left:1654px;top:913px">否</div>
<div class="a" style="left:1906px;top:449px;width:12px;height:496px;background:#353535"></div>
<div class="thumb" style="left:1908px;top:466px;width:10px;height:384px"></div>
<div class="arr" style="left:1909px;top:454px;border-left:4px solid transparent;border-right:4px solid transparent;border-bottom:5px solid #c8c8c8"></div>
<div class="arr" style="left:1909px;top:934px;border-left:4px solid transparent;border-right:4px solid transparent;border-top:5px solid #c8c8c8"></div>
<div class="a" style="left:0;top:945px;width:1918px;height:22px;background:#191919"></div>
<div class="a" style="left:0;top:967px;width:1918px;height:3px;background:#1b2632"></div>
<div class="a" style="left:342px;top:967px;width:48px;height:3px;background:#b5713f"></div>
<div class="a" style="left:538px;top:967px;width:47px;height:3px;background:#5c6166"></div>
<svg class="a" style="left:2px;top:949px" width="14" height="14" viewBox="0 0 14 14"><path d="M7 0.8L13.600 12.800H0.400z" fill="#fcc400" stroke="#fcc400" stroke-width="0.8" stroke-linejoin="round"/><rect x="6.200" y="4.500" width="1.600" height="4.700" fill="#191919"/><rect x="6.200" y="10" width="1.600" height="1.600" fill="#191919"/></svg>
<div class="t" style="left:19px;top:949px;color:#efbd00;font-size:13.040px">MenuItem Help/RPG Maker Unite Help... was added twice</div>
<div class="a" style="left:1814px;top:948px;width:1px;height:19px;background:#262626"></div>
<div class="a" style="left:1840px;top:948px;width:1px;height:19px;background:#262626"></div>
<div class="a" style="left:1866px;top:948px;width:1px;height:19px;background:#262626"></div>
<div class="a" style="left:1892px;top:948px;width:1px;height:19px;background:#262626"></div>
<svg class="a" style="left:1819px;top:949px" width="16" height="16" viewBox="0 0 16 16"><ellipse cx="8" cy="9.200" rx="4.500" ry="5.400" fill="#cfcfcf"/><circle cx="8" cy="3.400" r="2.300" fill="#cfcfcf"/><path d="M3.800 6.500L1.800 5M3.600 9.500H1.200M4 12.500l-2 1.800M12.200 6.500l2-1.500M12.400 9.500h2.400M12 12.500l2 1.800M6.500 2.500L5.500 1M9.500 2.500l1-1.500" stroke="#cfcfcf" stroke-width="1.100" fill="none"/><path d="M2 1.500l12.500 13.500" stroke="#191919" stroke-width="3"/><path d="M1.800 1.200l12.500 13.500" stroke="#cfcfcf" stroke-width="1.200"/></svg><svg class="a" style="left:1845px;top:949px" width="16" height="16" viewBox="0 0 16 16"><ellipse cx="8" cy="4" rx="5.600" ry="2.600" fill="#cfcfcf"/><path d="M2.400 6.200v2.200c0 1.400 2.500 2.600 5.600 2.600s5.600-1.200 5.600-2.600V6.200c0 1.400-2.500 2.600-5.600 2.600S2.400 7.600 2.400 6.200z" fill="#cfcfcf"/><path d="M2.400 10v2.200c0 1.400 2.500 2.600 5.600 2.600s5.600-1.200 5.600-2.600V10c0 1.400-2.500 2.600-5.600 2.600S2.400 11.400 2.400 10z" fill="#cfcfcf"/><path d="M2 1.500l12.500 13.500" stroke="#191919" stroke-width="3"/><path d="M1.800 1.200l12.500 13.500" stroke="#cfcfcf" stroke-width="1.200"/></svg><svg class="a" style="left:1871px;top:949px" width="16" height="16" viewBox="0 0 16 16"><path d="M2.200 7a6 6 0 0 1 10.600-3M13.800 9a6 6 0 0 1-10.600 3" fill="none" stroke="#cfcfcf" stroke-width="1.500"/><path d="M13.800 1v4h-4zM2.200 15v-4h4z" fill="#cfcfcf"/><circle cx="8" cy="7" r="2.600" fill="#cfcfcf"/><rect x="6.800" y="9.400" width="2.400" height="2.200" fill="#cfcfcf"/><path d="M2 1.500l12.500 13.500" stroke="#191919" stroke-width="3"/><path d="M1.800 1.200l12.500 13.500" stroke="#cfcfcf" stroke-width="1.200"/></svg><svg class="a" style="left:1897px;top:949px" width="16" height="16" viewBox="0 0 16 16"><circle cx="8" cy="8" r="6.600" fill="none" stroke="#cfcfcf" stroke-width="1.300"/><path d="M5 8.200l2.200 2.200 4-4.200" fill="none" stroke="#cfcfcf" stroke-width="1.500"/></svg>
<svg class="a" style="left:0;top:0" width="1918" height="970" viewBox="0 0 1918 970"><path fill-rule="evenodd" fill="#ed1c24" d="M314.100 503H1378.500V952.600H314.100zM319.100 508V947.700H1373.900V508z"/><path fill-rule="evenodd" fill="#001ee6" d="M1378 423H1930V948H1378zM1383.100 428.400V943H1925V428.400z"/></svg>
</div></body></html>
